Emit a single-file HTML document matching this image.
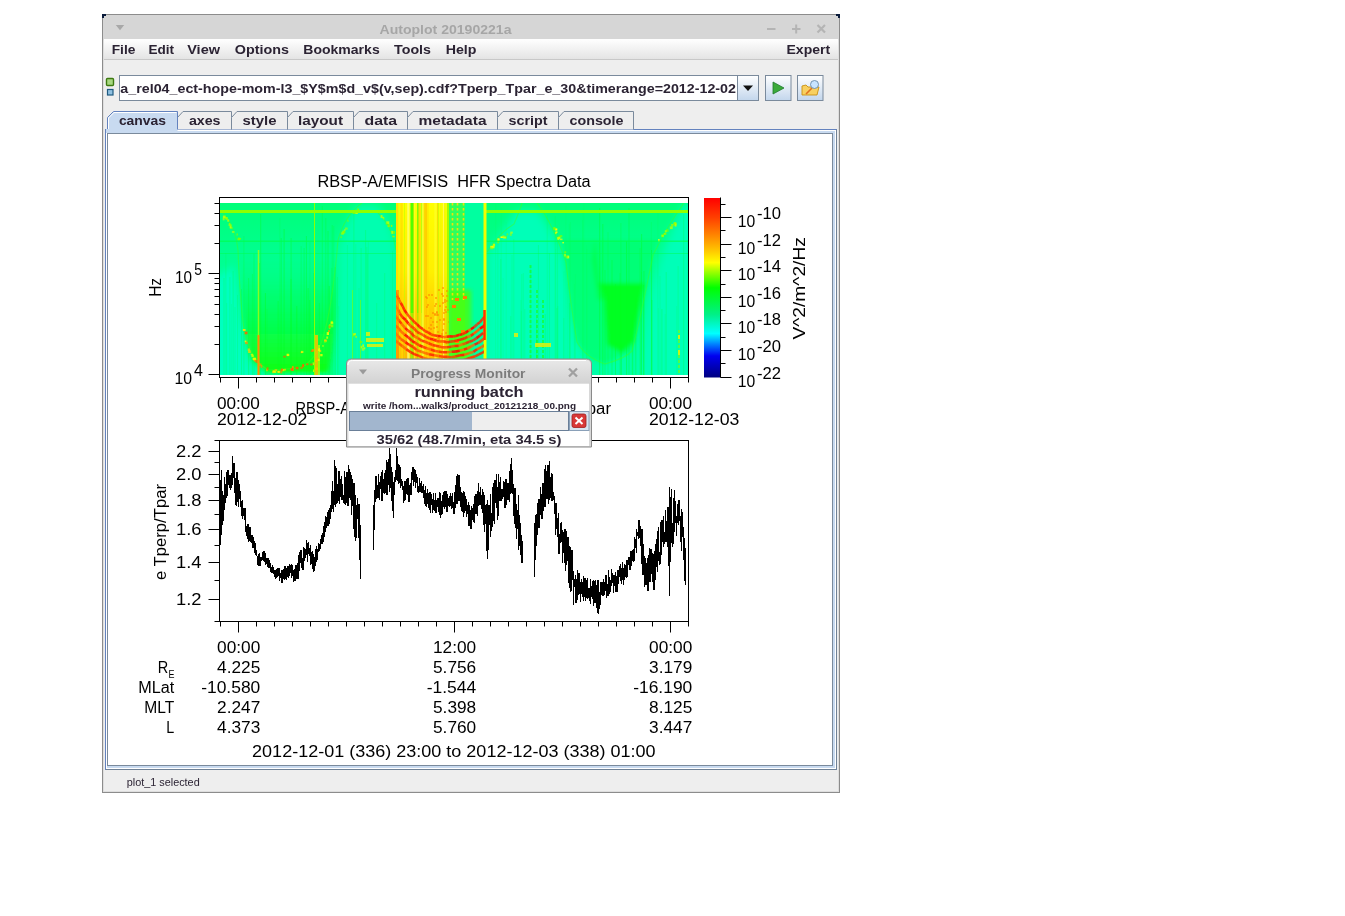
<!DOCTYPE html><html><head><meta charset="utf-8"><style>html,body{margin:0;padding:0;background:#fff;width:1345px;height:916px;overflow:hidden;position:relative}</style></head><body><svg width="1345" height="916" viewBox="0 0 1345 916" style="position:absolute;left:0;top:0;will-change:transform" font-family='"Liberation Sans", sans-serif'>
<defs>
<linearGradient id="menug" x1="0" y1="0" x2="0" y2="1"><stop offset="0" stop-color="#ffffff"/><stop offset="1" stop-color="#e4e4e4"/></linearGradient>
<linearGradient id="btng" x1="0" y1="0" x2="0" y2="1"><stop offset="0" stop-color="#ffffff"/><stop offset="1" stop-color="#c3d6ec"/></linearGradient>
<linearGradient id="cbar" x1="0" y1="0" x2="0" y2="1">
<stop offset="0" stop-color="#ff0000"/>
<stop offset="0.11" stop-color="#ff4000"/>
<stop offset="0.20" stop-color="#ff8000"/>
<stop offset="0.285" stop-color="#ffc000"/>
<stop offset="0.36" stop-color="#ffff00"/>
<stop offset="0.41" stop-color="#a0ff00"/>
<stop offset="0.50" stop-color="#00ff00"/>
<stop offset="0.65" stop-color="#00f088"/>
<stop offset="0.755" stop-color="#00ffff"/>
<stop offset="0.815" stop-color="#0080ff"/>
<stop offset="0.88" stop-color="#0000f0"/>
<stop offset="1" stop-color="#000080"/>
</linearGradient>
<linearGradient id="specbg" x1="0" y1="0" x2="0" y2="1">
<stop offset="0" stop-color="#00ff78"/>
<stop offset="0.3" stop-color="#00ff90"/>
<stop offset="1" stop-color="#00ffa8"/>
</linearGradient>
<filter id="blur2"><feGaussianBlur stdDeviation="2"/></filter>
<filter id="blur4"><feGaussianBlur stdDeviation="4"/></filter>
<filter id="blur8"><feGaussianBlur stdDeviation="8"/></filter>
<clipPath id="specclip"><rect x="220" y="203" width="468" height="172"/></clipPath>
<clipPath id="tsclip"><rect x="220" y="440.5" width="468" height="180.5"/></clipPath>
</defs>
<rect x="0" y="0" width="1345" height="916" fill="#ffffff"/>
<rect x="102" y="14" width="738" height="779" fill="#8c8c8c"/>
<rect x="103" y="15" width="736" height="777" fill="#dedede"/>
<rect x="104" y="15" width="734" height="776" fill="#eeeeee"/>
<rect x="103" y="15" width="736" height="24.5" fill="#d6d6d6"/>
<path d="M102 14 H106 V16 H104 V18 H102 Z" fill="#0a1a3a"/><path d="M840 14 H836 V16 H838 V18 H840 Z" fill="#0a1a3a"/>
<path d="M115.8 25 L124.2 25 L120 30.3 Z" fill="#a8a8a8"/>
<text x="379.5" y="33.7" font-size="13" font-weight="bold" fill="#a6a6a6" text-anchor="start" textLength="132" lengthAdjust="spacingAndGlyphs" >Autoplot 20190221a</text>
<rect x="767" y="28" width="8.5" height="2" fill="#b4b4b4"/>
<rect x="792" y="28" width="8.5" height="2" fill="#b4b4b4"/><rect x="795.2" y="24.5" width="2" height="9" fill="#b4b4b4"/>
<path d="M817.5 25 L825 32.5 M825 25 L817.5 32.5" stroke="#b4b4b4" stroke-width="2.2"/>
<rect x="104" y="39" width="734" height="20" fill="url(#menug)"/>
<rect x="104" y="59" width="734" height="1" fill="#c8c8c8"/>
<text x="111.7" y="53.8" font-size="12.6" font-weight="bold" fill="#2b2333" text-anchor="start" textLength="23.7" lengthAdjust="spacingAndGlyphs" >File</text>
<text x="148.5" y="53.8" font-size="12.6" font-weight="bold" fill="#2b2333" text-anchor="start" textLength="25.6" lengthAdjust="spacingAndGlyphs" >Edit</text>
<text x="187.2" y="53.8" font-size="12.6" font-weight="bold" fill="#2b2333" text-anchor="start" textLength="32.8" lengthAdjust="spacingAndGlyphs" >View</text>
<text x="234.8" y="53.8" font-size="12.6" font-weight="bold" fill="#2b2333" text-anchor="start" textLength="54.2" lengthAdjust="spacingAndGlyphs" >Options</text>
<text x="303.3" y="53.8" font-size="12.6" font-weight="bold" fill="#2b2333" text-anchor="start" textLength="76.4" lengthAdjust="spacingAndGlyphs" >Bookmarks</text>
<text x="394.1" y="53.8" font-size="12.6" font-weight="bold" fill="#2b2333" text-anchor="start" textLength="36.9" lengthAdjust="spacingAndGlyphs" >Tools</text>
<text x="445.7" y="53.8" font-size="12.6" font-weight="bold" fill="#2b2333" text-anchor="start" textLength="30.8" lengthAdjust="spacingAndGlyphs" >Help</text>
<text x="786.5" y="53.8" font-size="12.6" font-weight="bold" fill="#2b2333" text-anchor="start" textLength="43.7" lengthAdjust="spacingAndGlyphs" >Expert</text>
<rect x="106.5" y="78.5" width="7" height="7" rx="1" fill="#a8d880" stroke="#3d7a10" stroke-width="1.4"/>
<rect x="107.5" y="89.5" width="5.5" height="5.5" fill="#90c0e0" stroke="#1f5a80" stroke-width="1.2"/>
<rect x="119.5" y="75.5" width="618" height="25" fill="#ffffff" stroke="#7a8a9c" stroke-width="1"/>
<text x="120.3" y="92.5" font-size="13" font-weight="bold" fill="#2b2333" text-anchor="start" textLength="615.7" lengthAdjust="spacingAndGlyphs" >a_rel04_ect-hope-mom-l3_$Y$m$d_v$(v,sep).cdf?Tperp_Tpar_e_30&amp;timerange=2012-12-02</text>
<rect x="737.5" y="75.5" width="21" height="25" fill="url(#btng)" stroke="#7a8a9c"/>
<path d="M743 85.5 L753 85.5 L748 91 Z" fill="#111"/>
<rect x="765.5" y="75.5" width="25.5" height="25" fill="url(#btng)" stroke="#7a8a9c"/>
<path d="M773 82 L773 94 L784 88 Z" fill="#3aaa3a" stroke="#1f7a2f" stroke-width="0.8"/>
<rect x="797.5" y="75.5" width="25.5" height="25" fill="url(#btng)" stroke="#7a8a9c"/>
<path d="M802 86 L802 95 L817 95 L819 87 L808 87 L806 85 Z" fill="#f8d060" stroke="#c89010" stroke-width="0.9"/>
<path d="M806 94 L812 88" stroke="#e07020" stroke-width="1.6"/>
<circle cx="814.5" cy="84.5" r="4" fill="#c8e4ff" stroke="#6a8aa8" stroke-width="0.9"/>
<rect x="105.5" y="129.5" width="731" height="640" fill="#c8daf0" stroke="#6382be" stroke-width="1"/>
<path d="M836.5 129.5 V769.5 H105.5" fill="none" stroke="#6f8196" stroke-width="1"/>
<rect x="106.5" y="130.5" width="729" height="638" fill="none" stroke="#ffffff" stroke-width="1"/>
<rect x="107.5" y="133.5" width="725" height="632" fill="#ffffff" stroke="#7a8a9c" stroke-width="1"/>
<path d="M177.5 129.5 L177.5 117.5 L183 111.5 L231.5 111.5 L231.5 129.5" fill="#eeeeee" stroke="#7a8a9c" stroke-width="1"/>
<text x="188.9" y="124.6" font-size="13" font-weight="bold" fill="#2b2333" text-anchor="start" textLength="31.6" lengthAdjust="spacingAndGlyphs" >axes</text>
<path d="M231.5 129.5 L231.5 117.5 L237 111.5 L287.5 111.5 L287.5 129.5" fill="#eeeeee" stroke="#7a8a9c" stroke-width="1"/>
<text x="242.5" y="124.6" font-size="13" font-weight="bold" fill="#2b2333" text-anchor="start" textLength="34" lengthAdjust="spacingAndGlyphs" >style</text>
<path d="M287.5 129.5 L287.5 117.5 L293 111.5 L353.5 111.5 L353.5 129.5" fill="#eeeeee" stroke="#7a8a9c" stroke-width="1"/>
<text x="298" y="124.6" font-size="13" font-weight="bold" fill="#2b2333" text-anchor="start" textLength="45" lengthAdjust="spacingAndGlyphs" >layout</text>
<path d="M353.5 129.5 L353.5 117.5 L359 111.5 L407.5 111.5 L407.5 129.5" fill="#eeeeee" stroke="#7a8a9c" stroke-width="1"/>
<text x="364.5" y="124.6" font-size="13" font-weight="bold" fill="#2b2333" text-anchor="start" textLength="32.5" lengthAdjust="spacingAndGlyphs" >data</text>
<path d="M407.5 129.5 L407.5 117.5 L413 111.5 L497.5 111.5 L497.5 129.5" fill="#eeeeee" stroke="#7a8a9c" stroke-width="1"/>
<text x="418.5" y="124.6" font-size="13" font-weight="bold" fill="#2b2333" text-anchor="start" textLength="68" lengthAdjust="spacingAndGlyphs" >metadata</text>
<path d="M497.5 129.5 L497.5 117.5 L503 111.5 L558.5 111.5 L558.5 129.5" fill="#eeeeee" stroke="#7a8a9c" stroke-width="1"/>
<text x="508.5" y="124.6" font-size="13" font-weight="bold" fill="#2b2333" text-anchor="start" textLength="39" lengthAdjust="spacingAndGlyphs" >script</text>
<path d="M558.5 129.5 L558.5 117.5 L564 111.5 L633.5 111.5 L633.5 129.5" fill="#eeeeee" stroke="#7a8a9c" stroke-width="1"/>
<text x="569.5" y="124.6" font-size="13" font-weight="bold" fill="#2b2333" text-anchor="start" textLength="54" lengthAdjust="spacingAndGlyphs" >console</text>
<path d="M107.5 130 L107.5 117.5 L113.5 111.5 L177.5 111.5 L177.5 130" fill="#c8daf0" stroke="#6382be" stroke-width="1"/>
<rect x="105.5" y="129.5" width="1" height="1" fill="#6382be"/>
<path d="M108.5 130 L108.5 118 L114 112.5 L176.5 112.5" fill="none" stroke="#ffffff" stroke-width="1"/>
<rect x="106" y="129" width="71.5" height="4" fill="#c8daf0"/>
<text x="118.9" y="124.6" font-size="13" font-weight="bold" fill="#2b2333" text-anchor="start" textLength="47.1" lengthAdjust="spacingAndGlyphs" >canvas</text>
<text x="126.7" y="786" font-size="11" font-weight="normal" fill="#2b2333" text-anchor="start" textLength="73" lengthAdjust="spacingAndGlyphs" >plot_1 selected</text>
<g clip-path="url(#specclip)">
<rect x="220" y="203" width="468" height="172" fill="url(#specbg)"/>
<g filter="url(#blur4)">
<path d="M212 280 L234 266 L240 320 L248 365 L262 382 L212 382 Z" fill="#00ffc0"/>
<path d="M339 250 Q344 222 357 205 L378 205 Q390 220 396 248 L396 382 L337 382 Z" fill="#00ffb0"/>
<path d="M488 255 Q505 228 516 210 L538 210 Q556 236 564 262 L572 315 L577 342 L590 382 L487 382 Z" fill="#00ffb8"/>
<path d="M650 300 Q660 250 684 203 L696 203 L696 382 L640 382 Z" fill="#00ffb8"/>
</g>
<defs><linearGradient id="u1g" x1="0" y1="0" x2="0" y2="1"><stop offset="0" stop-color="#00ff80" stop-opacity="0"/><stop offset="0.35" stop-color="#00ff60" stop-opacity="0.7"/><stop offset="1" stop-color="#10ff10" stop-opacity="1"/></linearGradient>
<linearGradient id="u2g" x1="0" y1="0" x2="0" y2="1"><stop offset="0" stop-color="#00ff80" stop-opacity="0"/><stop offset="0.3" stop-color="#00ff50" stop-opacity="0.8"/><stop offset="0.7" stop-color="#00ff10" stop-opacity="1"/><stop offset="1" stop-color="#00ff40" stop-opacity="0.8"/></linearGradient></defs>
<g filter="url(#blur2)">
<path d="M240 255 Q241 330 252 360 L268 373 L328 373 Q337 330 338 255 Z" fill="url(#u1g)"/>
<path d="M562 240 L566 262 L572 315 L577 342 L590 359 L605 364 L632 351 L644 300 L653 255 L657 240 Z" fill="#00ff70" opacity="0.8"/>
<path d="M598 283 L604 300 L607 345 L622 353 L634 342 L643 290 L645 283 Z" fill="#00ff20"/>
<path d="M595 240 L600 283 L606 300 L598 300 L592 260 Z" fill="#00ff40" opacity="0.7"/>
</g>
<rect x="331.4" y="268" width="1" height="107" fill="#00ff20" opacity="0.26"/>
<rect x="502.6" y="278" width="1" height="97" fill="#00ff60" opacity="0.17"/>
<rect x="226.2" y="303" width="1" height="72" fill="#00ff60" opacity="0.23"/>
<rect x="329.7" y="322" width="1" height="53" fill="#00ff20" opacity="0.29"/>
<rect x="611.5" y="260" width="1" height="115" fill="#00ff20" opacity="0.34"/>
<rect x="290.5" y="279" width="1" height="96" fill="#00ff20" opacity="0.41"/>
<rect x="566.9" y="284" width="1" height="91" fill="#00ff60" opacity="0.17"/>
<rect x="574.9" y="274" width="1" height="101" fill="#00ff60" opacity="0.24"/>
<rect x="234.5" y="307" width="1" height="68" fill="#00ff60" opacity="0.29"/>
<rect x="556.4" y="308" width="1" height="67" fill="#00ff60" opacity="0.36"/>
<rect x="651.1" y="250" width="1" height="125" fill="#00ff20" opacity="0.39"/>
<rect x="657.9" y="308" width="1" height="67" fill="#00ff60" opacity="0.18"/>
<rect x="283.6" y="229" width="1" height="146" fill="#00ff20" opacity="0.44"/>
<rect x="513.3" y="239" width="1" height="136" fill="#00ff60" opacity="0.30"/>
<rect x="384.2" y="273" width="1" height="102" fill="#00ff60" opacity="0.33"/>
<rect x="643.2" y="285" width="1" height="90" fill="#00ff20" opacity="0.43"/>
<rect x="620.8" y="322" width="1" height="53" fill="#00ff20" opacity="0.35"/>
<rect x="296.3" y="306" width="1" height="69" fill="#00ff20" opacity="0.44"/>
<rect x="643.4" y="271" width="1" height="104" fill="#00ff20" opacity="0.36"/>
<rect x="318.8" y="303" width="1" height="72" fill="#00ff20" opacity="0.32"/>
<rect x="353.4" y="211" width="1" height="164" fill="#00ff60" opacity="0.41"/>
<rect x="683.2" y="214" width="1" height="161" fill="#00ff60" opacity="0.39"/>
<rect x="290.6" y="238" width="1" height="137" fill="#00ff20" opacity="0.38"/>
<rect x="628.5" y="208" width="1" height="167" fill="#00ff20" opacity="0.33"/>
<rect x="241.0" y="289" width="1" height="86" fill="#00ff20" opacity="0.25"/>
<rect x="632.3" y="321" width="1" height="54" fill="#00ff20" opacity="0.30"/>
<rect x="687.3" y="240" width="1" height="135" fill="#00ff60" opacity="0.17"/>
<rect x="500.7" y="207" width="1" height="168" fill="#00ff60" opacity="0.21"/>
<rect x="505.7" y="222" width="1" height="153" fill="#00ff60" opacity="0.16"/>
<rect x="626.1" y="241" width="1" height="134" fill="#00ff20" opacity="0.44"/>
<rect x="639.6" y="248" width="1" height="127" fill="#00ff20" opacity="0.29"/>
<rect x="521.3" y="274" width="1" height="101" fill="#00ff60" opacity="0.32"/>
<rect x="510.2" y="316" width="1" height="59" fill="#00ff60" opacity="0.30"/>
<rect x="557.1" y="232" width="1" height="143" fill="#00ff60" opacity="0.24"/>
<rect x="677.6" y="266" width="1" height="109" fill="#00ff60" opacity="0.31"/>
<rect x="225.4" y="253" width="1" height="122" fill="#00ff60" opacity="0.32"/>
<rect x="229.4" y="277" width="1" height="98" fill="#00ff60" opacity="0.34"/>
<rect x="248.1" y="278" width="1" height="97" fill="#00ff20" opacity="0.29"/>
<rect x="537.9" y="245" width="1" height="130" fill="#00ff60" opacity="0.36"/>
<rect x="565.4" y="206" width="1" height="169" fill="#00ff60" opacity="0.17"/>
<rect x="536.4" y="319" width="1" height="56" fill="#00ff60" opacity="0.23"/>
<rect x="497.4" y="241" width="1" height="134" fill="#00ff60" opacity="0.26"/>
<rect x="366.3" y="247" width="1" height="128" fill="#00ff60" opacity="0.33"/>
<rect x="360.6" y="248" width="1" height="127" fill="#00ff60" opacity="0.38"/>
<rect x="232.6" y="271" width="1" height="104" fill="#00ff60" opacity="0.37"/>
<rect x="365.1" y="230" width="1" height="145" fill="#00ff60" opacity="0.39"/>
<rect x="331.7" y="225" width="1" height="150" fill="#00ff20" opacity="0.28"/>
<rect x="546.7" y="215" width="1" height="160" fill="#00ff60" opacity="0.25"/>
<rect x="376.2" y="303" width="1" height="72" fill="#00ff60" opacity="0.28"/>
<rect x="620.4" y="223" width="1" height="152" fill="#00ff20" opacity="0.25"/>
<rect x="524.3" y="309" width="1" height="66" fill="#00ff60" opacity="0.29"/>
<rect x="325.3" y="218" width="1" height="157" fill="#00ff20" opacity="0.31"/>
<rect x="309.3" y="300" width="1" height="75" fill="#00ff20" opacity="0.40"/>
<rect x="305.9" y="236" width="1" height="139" fill="#00ff20" opacity="0.39"/>
<rect x="520.4" y="300" width="1" height="75" fill="#00ff60" opacity="0.25"/>
<rect x="280.7" y="238" width="1" height="137" fill="#00ff20" opacity="0.39"/>
<rect x="346.9" y="245" width="1" height="130" fill="#00ff60" opacity="0.28"/>
<rect x="650.8" y="222" width="1" height="153" fill="#00ff20" opacity="0.15"/>
<rect x="661.4" y="309" width="1" height="66" fill="#00ff60" opacity="0.45"/>
<rect x="664.7" y="314" width="1" height="61" fill="#00ff60" opacity="0.22"/>
<rect x="568.9" y="303" width="1" height="72" fill="#00ff60" opacity="0.35"/>
<rect x="355.3" y="244" width="1" height="131" fill="#00ff60" opacity="0.22"/>
<rect x="251.9" y="274" width="1" height="101" fill="#00ff20" opacity="0.24"/>
<rect x="599.2" y="208" width="1" height="167" fill="#00ff20" opacity="0.42"/>
<rect x="544.7" y="314" width="1" height="61" fill="#00ff60" opacity="0.42"/>
<rect x="641.0" y="272" width="1" height="103" fill="#00ff20" opacity="0.15"/>
<rect x="568.8" y="224" width="1" height="151" fill="#00ff60" opacity="0.24"/>
<rect x="530.2" y="266" width="1" height="109" fill="#00ff60" opacity="0.27"/>
<rect x="659.5" y="276" width="1" height="99" fill="#00ff60" opacity="0.25"/>
<rect x="338.2" y="306" width="1" height="69" fill="#00ff60" opacity="0.29"/>
<rect x="586.1" y="245" width="1" height="130" fill="#00ff60" opacity="0.21"/>
<rect x="602.3" y="224" width="1" height="151" fill="#00ff20" opacity="0.39"/>
<rect x="651.4" y="300" width="1" height="75" fill="#00ff20" opacity="0.40"/>
<rect x="223.5" y="278" width="1" height="97" fill="#00ff60" opacity="0.41"/>
<rect x="243.4" y="236" width="1" height="139" fill="#00ff20" opacity="0.23"/>
<rect x="583.4" y="203" width="1" height="172" fill="#00ff60" opacity="0.17"/>
<rect x="279.4" y="218" width="1" height="157" fill="#00ff20" opacity="0.17"/>
<rect x="676.2" y="306" width="1" height="69" fill="#00ff60" opacity="0.18"/>
<rect x="367.8" y="241" width="1" height="134" fill="#00ff60" opacity="0.26"/>
<rect x="522.8" y="273" width="1" height="102" fill="#00ff60" opacity="0.26"/>
<rect x="309.4" y="242" width="1" height="133" fill="#00ff20" opacity="0.19"/>
<rect x="555.1" y="249" width="1" height="126" fill="#00ff60" opacity="0.17"/>
<rect x="303.6" y="248" width="1" height="127" fill="#00ff20" opacity="0.33"/>
<rect x="586.3" y="249" width="1" height="126" fill="#00ff60" opacity="0.39"/>
<rect x="511.5" y="255" width="1" height="120" fill="#00ff60" opacity="0.26"/>
<rect x="548.9" y="253" width="1" height="122" fill="#00ff60" opacity="0.36"/>
<rect x="334.7" y="267" width="1" height="108" fill="#00ff20" opacity="0.36"/>
<rect x="253.5" y="254" width="1" height="121" fill="#00ff20" opacity="0.28"/>
<rect x="631.7" y="315" width="1" height="60" fill="#00ff20" opacity="0.26"/>
<rect x="640.2" y="298" width="1" height="77" fill="#00ff20" opacity="0.23"/>
<rect x="277.6" y="301" width="1" height="74" fill="#00ff20" opacity="0.35"/>
<rect x="635.3" y="298" width="1" height="77" fill="#00ff20" opacity="0.35"/>
<rect x="563.4" y="271" width="1" height="104" fill="#00ff60" opacity="0.18"/>
<rect x="495.1" y="204" width="1" height="171" fill="#00ff60" opacity="0.19"/>
<rect x="582.4" y="208" width="1" height="167" fill="#00ff60" opacity="0.18"/>
<rect x="266.5" y="309" width="1" height="66" fill="#00ff20" opacity="0.20"/>
<rect x="231.0" y="304" width="1" height="71" fill="#00ff60" opacity="0.19"/>
<rect x="615.0" y="284" width="1" height="91" fill="#00ff20" opacity="0.40"/>
<rect x="665.7" y="272" width="1" height="103" fill="#00ff60" opacity="0.39"/>
<rect x="237.0" y="295" width="1" height="80" fill="#00ff60" opacity="0.30"/>
<rect x="554.7" y="216" width="1" height="159" fill="#00ff60" opacity="0.37"/>
<rect x="657.4" y="210" width="1" height="165" fill="#00ff60" opacity="0.25"/>
<rect x="607.5" y="232" width="1" height="143" fill="#00ff20" opacity="0.20"/>
<rect x="337.0" y="277" width="1" height="98" fill="#00ff60" opacity="0.38"/>
<rect x="392.0" y="251" width="1" height="124" fill="#00ff60" opacity="0.26"/>
<rect x="259.0" y="263" width="1" height="112" fill="#00ff20" opacity="0.44"/>
<rect x="569.8" y="222" width="1" height="153" fill="#00ff60" opacity="0.36"/>
<rect x="573.9" y="284" width="1" height="91" fill="#00ff60" opacity="0.31"/>
<rect x="520.9" y="311" width="1" height="64" fill="#00ff60" opacity="0.19"/>
<rect x="264.9" y="293" width="1" height="82" fill="#00ff20" opacity="0.42"/>
<rect x="556.5" y="225" width="1" height="150" fill="#00ff60" opacity="0.23"/>
<rect x="313.2" y="273" width="1" height="102" fill="#00ff20" opacity="0.24"/>
<rect x="328.7" y="286" width="1" height="89" fill="#00ff20" opacity="0.44"/>
<rect x="358.5" y="288" width="1" height="87" fill="#00ff60" opacity="0.27"/>
<rect x="619.5" y="273" width="1" height="102" fill="#00ff20" opacity="0.23"/>
<rect x="321.8" y="206" width="1" height="169" fill="#00ff20" opacity="0.29"/>
<rect x="300.6" y="246" width="1" height="129" fill="#00ff20" opacity="0.25"/>
<rect x="582.3" y="220" width="1" height="155" fill="#00ff60" opacity="0.45"/>
<rect x="500.3" y="259" width="1" height="116" fill="#00ff60" opacity="0.40"/>
<rect x="604.5" y="270" width="1" height="105" fill="#00ff20" opacity="0.29"/>
<rect x="557.3" y="306" width="1" height="69" fill="#00ff60" opacity="0.27"/>
<rect x="563.3" y="318" width="1" height="57" fill="#00ff60" opacity="0.29"/>
<rect x="327.5" y="231" width="1" height="144" fill="#00ff20" opacity="0.37"/>
<rect x="536.1" y="318" width="1" height="57" fill="#00ff60" opacity="0.41"/>
<rect x="333.3" y="226" width="1" height="149" fill="#00ff20" opacity="0.23"/>
<rect x="307.6" y="288" width="1" height="87" fill="#00ff20" opacity="0.41"/>
<rect x="641.1" y="234" width="1" height="141" fill="#00ff20" opacity="0.41"/>
<rect x="366.7" y="254" width="1" height="121" fill="#00ff60" opacity="0.37"/>
<rect x="260.2" y="214" width="1" height="161" fill="#00ff20" opacity="0.40"/>
<g fill="none" stroke="#40ff20" stroke-width="1.2" opacity="0.45">
<path d="M222 211 Q236 228 238 250 Q240 300 244 330 Q252 365 270 370 L300 368 Q318 360 325 330 Q333 300 338 240 Q345 215 362 203"/>
<path d="M378 213 Q392 225 396 250"/>
<path d="M487 252 Q500 232 514 224 Q520 210 522 203"/>
<path d="M537 203 Q552 222 566 262 Q570 300 577 342 Q585 357 605 364 Q626 358 632 351 Q640 320 653 255 Q668 225 684 203"/>
</g>
<rect x="227.2" y="219.3" width="2.0" height="2.4" fill="#c8ff00" opacity="0.73"/>
<rect x="228.8" y="222.9" width="1.6" height="2.5" fill="#a0ff00" opacity="0.82"/>
<rect x="222.7" y="217.8" width="1.9" height="2.5" fill="#c8ff00" opacity="0.64"/>
<rect x="237.8" y="237.6" width="2.1" height="2.7" fill="#80ff00" opacity="0.87"/>
<rect x="238.4" y="237.9" width="2.7" height="1.7" fill="#80ff00" opacity="0.81"/>
<rect x="224.5" y="217.1" width="2.2" height="2.0" fill="#80ff00" opacity="0.90"/>
<rect x="231.9" y="231.1" width="2.6" height="1.7" fill="#c8ff00" opacity="0.65"/>
<rect x="237.6" y="238.3" width="1.7" height="2.0" fill="#80ff00" opacity="0.72"/>
<rect x="225.6" y="217.1" width="2.2" height="2.7" fill="#a0ff00" opacity="0.90"/>
<rect x="230.0" y="226.8" width="2.6" height="2.0" fill="#a0ff00" opacity="0.62"/>
<rect x="229.6" y="225.6" width="1.9" height="2.7" fill="#c8ff00" opacity="0.78"/>
<rect x="236.4" y="233.4" width="1.6" height="2.2" fill="#80ff00" opacity="0.64"/>
<rect x="222.9" y="215.6" width="2.7" height="2.6" fill="#c8ff00" opacity="0.87"/>
<rect x="228.6" y="224.3" width="3.0" height="1.7" fill="#a0ff00" opacity="0.82"/>
<rect x="342.5" y="230.8" width="1.8" height="2.8" fill="#c8ff00" opacity="0.96"/>
<rect x="357.1" y="208.5" width="2.1" height="2.3" fill="#80ff00" opacity="0.87"/>
<rect x="344.9" y="227.5" width="2.8" height="2.2" fill="#a0ff00" opacity="0.64"/>
<rect x="352.9" y="212.0" width="1.9" height="1.8" fill="#80ff00" opacity="0.68"/>
<rect x="352.6" y="210.8" width="2.9" height="2.9" fill="#80ff00" opacity="0.96"/>
<rect x="341.1" y="232.3" width="2.7" height="2.4" fill="#a0ff00" opacity="0.80"/>
<rect x="347.2" y="219.8" width="1.5" height="2.0" fill="#80ff00" opacity="0.65"/>
<rect x="355.4" y="211.0" width="2.4" height="2.9" fill="#c8ff00" opacity="1.00"/>
<rect x="343.9" y="229.3" width="1.6" height="1.8" fill="#c8ff00" opacity="0.64"/>
<rect x="340.4" y="236.3" width="1.6" height="1.8" fill="#80ff00" opacity="0.63"/>
<rect x="353.2" y="210.3" width="1.8" height="2.2" fill="#80ff00" opacity="0.76"/>
<rect x="342.6" y="230.7" width="2.8" height="2.6" fill="#80ff00" opacity="0.74"/>
<rect x="386.3" y="221.3" width="3.0" height="2.7" fill="#c8ff00" opacity="0.81"/>
<rect x="383.0" y="217.2" width="1.5" height="2.4" fill="#a0ff00" opacity="0.64"/>
<rect x="381.8" y="216.8" width="2.2" height="1.6" fill="#c8ff00" opacity="0.61"/>
<rect x="391.2" y="230.7" width="1.9" height="1.6" fill="#a0ff00" opacity="0.70"/>
<rect x="385.7" y="222.7" width="1.8" height="2.0" fill="#80ff00" opacity="0.62"/>
<rect x="391.3" y="231.2" width="1.9" height="2.7" fill="#c8ff00" opacity="0.80"/>
<rect x="390.8" y="224.9" width="1.5" height="2.0" fill="#a0ff00" opacity="0.87"/>
<rect x="392.3" y="235.8" width="2.4" height="1.5" fill="#a0ff00" opacity="0.80"/>
<rect x="387.7" y="224.8" width="1.8" height="2.3" fill="#c8ff00" opacity="0.74"/>
<rect x="387.8" y="224.2" width="2.0" height="2.5" fill="#80ff00" opacity="0.98"/>
<rect x="380.6" y="215.1" width="1.9" height="2.8" fill="#c8ff00" opacity="0.81"/>
<rect x="393.0" y="231.0" width="2.1" height="2.8" fill="#80ff00" opacity="0.74"/>
<rect x="491.4" y="246.4" width="2.7" height="2.2" fill="#80ff00" opacity="0.71"/>
<rect x="492.0" y="245.8" width="2.6" height="2.4" fill="#ffff00" opacity="0.62"/>
<rect x="490.2" y="246.6" width="2.6" height="2.7" fill="#a0ff00" opacity="0.73"/>
<rect x="500.5" y="236.4" width="2.7" height="1.6" fill="#ffff00" opacity="0.96"/>
<rect x="502.4" y="235.3" width="2.0" height="2.1" fill="#a0ff00" opacity="0.74"/>
<rect x="492.9" y="243.7" width="2.2" height="2.7" fill="#c8ff00" opacity="0.97"/>
<rect x="490.3" y="245.8" width="3.0" height="1.7" fill="#ffff00" opacity="0.80"/>
<rect x="509.8" y="233.1" width="2.0" height="2.8" fill="#a0ff00" opacity="0.62"/>
<rect x="504.6" y="235.9" width="2.4" height="2.8" fill="#80ff00" opacity="0.63"/>
<rect x="497.3" y="240.6" width="1.8" height="2.7" fill="#80ff00" opacity="0.76"/>
<rect x="503.1" y="236.6" width="2.7" height="1.9" fill="#ffff00" opacity="0.68"/>
<rect x="497.4" y="238.3" width="2.2" height="2.6" fill="#ffff00" opacity="0.90"/>
<rect x="510.3" y="231.6" width="2.5" height="2.0" fill="#c8ff00" opacity="0.70"/>
<rect x="506.6" y="233.4" width="1.6" height="1.9" fill="#80ff00" opacity="0.67"/>
<rect x="566.6" y="255.6" width="2.6" height="2.8" fill="#ffff00" opacity="0.75"/>
<rect x="554.9" y="228.4" width="2.4" height="2.1" fill="#ffff00" opacity="1.00"/>
<rect x="564.1" y="253.6" width="1.9" height="2.9" fill="#c8ff00" opacity="0.72"/>
<rect x="560.0" y="238.6" width="2.5" height="1.6" fill="#ffff00" opacity="0.62"/>
<rect x="557.4" y="237.1" width="1.8" height="2.7" fill="#ffff00" opacity="0.78"/>
<rect x="553.3" y="227.1" width="2.2" height="2.7" fill="#80ff00" opacity="0.98"/>
<rect x="559.4" y="235.1" width="2.9" height="2.2" fill="#80ff00" opacity="0.71"/>
<rect x="557.8" y="236.3" width="2.8" height="2.7" fill="#a0ff00" opacity="0.61"/>
<rect x="562.3" y="241.9" width="1.7" height="1.5" fill="#ffff00" opacity="0.74"/>
<rect x="565.6" y="255.8" width="2.0" height="2.3" fill="#80ff00" opacity="0.77"/>
<rect x="555.1" y="231.8" width="1.6" height="2.3" fill="#c8ff00" opacity="0.87"/>
<rect x="557.6" y="237.1" width="2.6" height="2.0" fill="#c8ff00" opacity="0.97"/>
<rect x="564.3" y="251.3" width="1.9" height="1.7" fill="#80ff00" opacity="0.82"/>
<rect x="555.7" y="231.4" width="1.8" height="1.5" fill="#ffff00" opacity="0.79"/>
<rect x="669.8" y="226.4" width="2.9" height="2.7" fill="#c8ff00" opacity="0.72"/>
<rect x="658.0" y="239.1" width="1.7" height="2.7" fill="#ffff00" opacity="0.78"/>
<rect x="671.1" y="224.0" width="2.2" height="2.9" fill="#a0ff00" opacity="0.76"/>
<rect x="673.4" y="222.5" width="2.7" height="2.9" fill="#a0ff00" opacity="0.80"/>
<rect x="661.4" y="234.3" width="2.6" height="2.9" fill="#80ff00" opacity="0.61"/>
<rect x="666.1" y="229.2" width="2.6" height="2.7" fill="#80ff00" opacity="0.67"/>
<rect x="663.7" y="233.0" width="2.7" height="2.0" fill="#80ff00" opacity="0.73"/>
<rect x="663.8" y="232.9" width="1.9" height="1.7" fill="#a0ff00" opacity="0.80"/>
<rect x="674.0" y="222.9" width="2.6" height="2.5" fill="#a0ff00" opacity="0.85"/>
<rect x="673.8" y="223.1" width="1.5" height="1.9" fill="#80ff00" opacity="0.99"/>
<rect x="664.8" y="230.2" width="1.9" height="2.3" fill="#c8ff00" opacity="0.66"/>
<rect x="674.7" y="223.6" width="1.8" height="3.0" fill="#c8ff00" opacity="0.76"/>
<rect x="661.4" y="234.8" width="2.4" height="2.0" fill="#c8ff00" opacity="0.62"/>
<rect x="674.0" y="222.1" width="2.3" height="2.1" fill="#a0ff00" opacity="0.71"/>
<rect x="244.7" y="340.6" width="1.7" height="1.7" fill="#ffff00" opacity="0.97"/>
<rect x="243.0" y="329.3" width="2.1" height="1.7" fill="#ff6000" opacity="0.98"/>
<rect x="252.6" y="357.9" width="2.6" height="2.0" fill="#e0ff00" opacity="0.83"/>
<rect x="253.5" y="358.5" width="2.3" height="2.2" fill="#ffd000" opacity="0.90"/>
<rect x="248.1" y="350.4" width="2.6" height="2.6" fill="#ffd000" opacity="0.73"/>
<rect x="266.1" y="368.8" width="1.7" height="2.4" fill="#ffd000" opacity="0.65"/>
<rect x="244.7" y="331.6" width="2.8" height="2.7" fill="#ff6000" opacity="0.88"/>
<rect x="247.7" y="348.5" width="2.2" height="2.4" fill="#ffd000" opacity="0.73"/>
<rect x="254.3" y="359.6" width="2.1" height="2.0" fill="#ff9000" opacity="0.94"/>
<rect x="266.6" y="367.2" width="1.9" height="3.0" fill="#ff6000" opacity="0.69"/>
<rect x="274.6" y="369.3" width="2.6" height="1.9" fill="#ffd000" opacity="0.79"/>
<rect x="255.6" y="360.0" width="2.8" height="3.0" fill="#ff6000" opacity="0.62"/>
<rect x="251.4" y="354.7" width="2.3" height="2.4" fill="#e0ff00" opacity="0.75"/>
<rect x="274.2" y="371.1" width="2.0" height="1.8" fill="#e0ff00" opacity="0.89"/>
<rect x="250.8" y="353.8" width="2.3" height="1.5" fill="#e0ff00" opacity="0.75"/>
<rect x="258.7" y="363.4" width="2.8" height="2.4" fill="#ff9000" opacity="0.63"/>
<rect x="242.8" y="329.1" width="2.8" height="1.8" fill="#ffff00" opacity="0.82"/>
<rect x="272.2" y="370.5" width="2.3" height="2.6" fill="#ffd000" opacity="0.78"/>
<rect x="260.6" y="365.0" width="1.7" height="2.8" fill="#ff9000" opacity="0.71"/>
<rect x="245.1" y="341.7" width="2.7" height="2.4" fill="#ff9000" opacity="0.75"/>
<rect x="253.1" y="357.7" width="3.0" height="2.2" fill="#e0ff00" opacity="0.83"/>
<rect x="273.0" y="370.4" width="1.9" height="1.9" fill="#ffff00" opacity="0.63"/>
<rect x="314.5" y="359.8" width="2.6" height="2.0" fill="#e0ff00" opacity="0.85"/>
<rect x="280.8" y="368.7" width="2.5" height="2.5" fill="#ff9000" opacity="0.68"/>
<rect x="292.1" y="368.5" width="1.6" height="2.5" fill="#ff6000" opacity="0.70"/>
<rect x="312.6" y="362.4" width="1.8" height="2.7" fill="#e0ff00" opacity="0.71"/>
<rect x="316.5" y="357.8" width="2.5" height="2.3" fill="#ff6000" opacity="0.65"/>
<rect x="300.4" y="366.8" width="2.4" height="2.0" fill="#ff6000" opacity="0.68"/>
<rect x="277.1" y="370.8" width="2.1" height="2.0" fill="#ffd000" opacity="0.67"/>
<rect x="280.1" y="370.5" width="2.2" height="2.9" fill="#ff9000" opacity="0.67"/>
<rect x="277.9" y="370.8" width="2.2" height="2.1" fill="#ffff00" opacity="0.69"/>
<rect x="291.9" y="366.1" width="1.8" height="1.9" fill="#ff9000" opacity="0.89"/>
<rect x="284.1" y="368.8" width="2.0" height="1.8" fill="#ffd000" opacity="0.69"/>
<rect x="306.1" y="363.4" width="2.4" height="1.8" fill="#ff6000" opacity="0.77"/>
<rect x="282.4" y="369.1" width="2.0" height="2.1" fill="#e0ff00" opacity="0.80"/>
<rect x="302.2" y="364.2" width="1.9" height="2.8" fill="#ff6000" opacity="0.99"/>
<rect x="290.5" y="368.3" width="3.0" height="2.2" fill="#ff9000" opacity="0.95"/>
<rect x="281.0" y="368.7" width="2.0" height="2.0" fill="#ff6000" opacity="0.66"/>
<rect x="314.7" y="359.9" width="2.1" height="1.6" fill="#ff6000" opacity="0.64"/>
<rect x="310.2" y="363.5" width="2.3" height="2.0" fill="#ff6000" opacity="0.73"/>
<rect x="295.6" y="366.8" width="2.9" height="2.5" fill="#ff6000" opacity="0.89"/>
<rect x="290.9" y="368.2" width="2.2" height="2.4" fill="#ff6000" opacity="0.93"/>
<rect x="310.8" y="350.3" width="2.0" height="1.7" fill="#ff6000" opacity="0.76"/>
<rect x="286.7" y="353.7" width="2.1" height="2.4" fill="#e0ff00" opacity="0.88"/>
<rect x="286.8" y="354.2" width="2.5" height="1.7" fill="#e0ff00" opacity="0.95"/>
<rect x="300.5" y="351.6" width="2.1" height="1.6" fill="#ff9000" opacity="0.65"/>
<rect x="319.0" y="349.8" width="2.2" height="2.2" fill="#ffd000" opacity="0.71"/>
<rect x="311.7" y="349.1" width="2.9" height="2.5" fill="#ff9000" opacity="0.89"/>
<rect x="318.5" y="348.0" width="1.6" height="2.6" fill="#e0ff00" opacity="0.73"/>
<rect x="283.2" y="355.8" width="2.7" height="1.7" fill="#ff6000" opacity="0.65"/>
<rect x="317.8" y="349.0" width="2.2" height="2.1" fill="#e0ff00" opacity="0.70"/>
<rect x="301.0" y="350.9" width="2.4" height="2.1" fill="#ffff00" opacity="0.68"/>
<rect x="331.0" y="324.4" width="2.3" height="2.9" fill="#a0ff00" opacity="0.70"/>
<rect x="326.7" y="332.1" width="2.3" height="2.9" fill="#e0ff00" opacity="0.99"/>
<rect x="328.5" y="325.2" width="2.2" height="2.6" fill="#ff9000" opacity="0.70"/>
<rect x="313.0" y="369.5" width="1.6" height="2.5" fill="#c8ff00" opacity="0.88"/>
<rect x="324.5" y="339.6" width="2.5" height="2.2" fill="#ffd000" opacity="0.71"/>
<rect x="328.8" y="327.6" width="1.8" height="1.5" fill="#a0ff00" opacity="0.64"/>
<rect x="330.8" y="320.9" width="2.1" height="2.7" fill="#a0ff00" opacity="0.85"/>
<rect x="322.0" y="345.2" width="1.9" height="1.5" fill="#c8ff00" opacity="0.64"/>
<rect x="320.2" y="354.0" width="2.4" height="2.3" fill="#ffff00" opacity="0.76"/>
<rect x="326.3" y="336.5" width="1.8" height="2.2" fill="#c8ff00" opacity="0.86"/>
<rect x="328.9" y="324.1" width="2.3" height="2.1" fill="#80ff00" opacity="0.80"/>
<rect x="314.9" y="367.9" width="2.9" height="2.4" fill="#ff9000" opacity="0.72"/>
<rect x="324.1" y="339.5" width="1.8" height="2.3" fill="#ffd000" opacity="0.79"/>
<rect x="316.8" y="358.9" width="2.9" height="2.1" fill="#ffff00" opacity="0.62"/>
<rect x="324.0" y="341.1" width="2.2" height="1.5" fill="#80ff00" opacity="0.80"/>
<rect x="330.6" y="321.9" width="2.7" height="2.0" fill="#ffff00" opacity="0.65"/>
<rect x="328.0" y="330.2" width="1.9" height="1.7" fill="#ff9000" opacity="0.85"/>
<rect x="315.5" y="367.6" width="2.5" height="2.3" fill="#ffd000" opacity="0.74"/>
<rect x="360.5" y="345.8" width="1.6" height="2.5" fill="#c8ff00" opacity="0.79"/>
<rect x="363.8" y="347.3" width="1.5" height="2.0" fill="#c8ff00" opacity="0.90"/>
<rect x="355.4" y="335.9" width="1.6" height="1.9" fill="#a0ff00" opacity="0.89"/>
<rect x="361.7" y="347.7" width="2.5" height="3.0" fill="#c8ff00" opacity="0.67"/>
<rect x="352.9" y="334.1" width="1.8" height="2.3" fill="#80ff00" opacity="0.83"/>
<rect x="359.6" y="341.0" width="2.7" height="2.0" fill="#80ff00" opacity="0.76"/>
<rect x="362.3" y="344.4" width="1.7" height="2.8" fill="#c8ff00" opacity="0.89"/>
<rect x="353.3" y="333.1" width="2.6" height="2.2" fill="#c8ff00" opacity="0.85"/>
<rect x="220" y="210" width="468" height="3" fill="#90ff00"/>
<rect x="220" y="240.5" width="468" height="1.5" fill="#00ff50" opacity="0.7"/>
<rect x="220" y="253" width="468" height="1" fill="#00ff50" opacity="0.5"/>
<defs><linearGradient id="bandg" x1="0" y1="0" x2="0" y2="1"><stop offset="0" stop-color="#ffff00"/><stop offset="0.4" stop-color="#fff000"/><stop offset="0.62" stop-color="#ffd000"/><stop offset="1" stop-color="#ffb000"/></linearGradient></defs>
<rect x="396" y="203" width="53" height="172" fill="url(#bandg)"/>
<rect x="420.7" y="203" width="1" height="172" fill="#ffff30" opacity="0.7"/>
<rect x="443.6" y="203" width="1" height="172" fill="#ffe000" opacity="0.7"/>
<rect x="446.9" y="203" width="2" height="172" fill="#ffe000" opacity="0.7"/>
<rect x="436.4" y="203" width="1" height="172" fill="#ffff30" opacity="0.7"/>
<rect x="401.4" y="203" width="1.5" height="172" fill="#ffe000" opacity="0.7"/>
<rect x="424.6" y="203" width="2" height="172" fill="#ffe000" opacity="0.7"/>
<rect x="418.6" y="203" width="1" height="172" fill="#ffe000" opacity="0.7"/>
<rect x="407.2" y="203" width="2" height="172" fill="#ffff80" opacity="0.7"/>
<rect x="421.9" y="203" width="2" height="172" fill="#ffff80" opacity="0.7"/>
<rect x="422.7" y="203" width="1.5" height="172" fill="#ffff30" opacity="0.7"/>
<rect x="424.6" y="203" width="1.5" height="172" fill="#ffc000" opacity="0.7"/>
<rect x="412.5" y="203" width="1" height="172" fill="#ffd000" opacity="0.7"/>
<rect x="446.7" y="203" width="1" height="172" fill="#e0ff00" opacity="0.7"/>
<rect x="400.5" y="203" width="1" height="172" fill="#ffd000" opacity="0.7"/>
<rect x="440.4" y="203" width="1" height="172" fill="#e0ff00" opacity="0.7"/>
<rect x="434.4" y="203" width="1.5" height="172" fill="#ffff30" opacity="0.7"/>
<rect x="425.0" y="203" width="1" height="172" fill="#ffe000" opacity="0.7"/>
<rect x="425.1" y="203" width="1" height="172" fill="#ffd000" opacity="0.7"/>
<rect x="422.4" y="203" width="1" height="172" fill="#e0ff00" opacity="0.7"/>
<rect x="444.6" y="203" width="1" height="172" fill="#e0ff00" opacity="0.7"/>
<rect x="437.1" y="203" width="1" height="172" fill="#e0ff00" opacity="0.7"/>
<rect x="411.1" y="203" width="1" height="172" fill="#e0ff00" opacity="0.7"/>
<rect x="443.1" y="203" width="1" height="172" fill="#ffff80" opacity="0.7"/>
<rect x="419.6" y="203" width="1" height="172" fill="#e0ff00" opacity="0.7"/>
<rect x="423.7" y="203" width="1.5" height="172" fill="#ffd000" opacity="0.7"/>
<rect x="426.1" y="203" width="1" height="172" fill="#ffc000" opacity="0.7"/>
<rect x="419.5" y="203" width="1.5" height="172" fill="#ffe000" opacity="0.7"/>
<rect x="414.2" y="203" width="1" height="172" fill="#ffff30" opacity="0.7"/>
<rect x="417.9" y="203" width="1.5" height="172" fill="#ffd000" opacity="0.7"/>
<rect x="437.3" y="203" width="1" height="172" fill="#ffc000" opacity="0.7"/>
<rect x="409.1" y="203" width="1" height="172" fill="#ffff30" opacity="0.7"/>
<rect x="397.3" y="203" width="1.5" height="172" fill="#e0ff00" opacity="0.7"/>
<rect x="427.2" y="203" width="1.5" height="172" fill="#ffe000" opacity="0.7"/>
<rect x="398.5" y="203" width="1" height="172" fill="#e0ff00" opacity="0.7"/>
<rect x="396" y="203" width="2" height="172" fill="#ffe000"/>
<rect x="410.5" y="203" width="3" height="110" fill="#40ff00" opacity="0.9"/>
<rect x="410.5" y="313" width="3" height="62" fill="#40ff00" opacity="0.45"/>
<rect x="417" y="203" width="1.5" height="110" fill="#60ff00" opacity="0.8"/>
<rect x="417" y="313" width="1.5" height="62" fill="#60ff00" opacity="0.40"/>
<rect x="421" y="203" width="1" height="110" fill="#a0ff00" opacity="0.7"/>
<rect x="421" y="313" width="1" height="62" fill="#a0ff00" opacity="0.35"/>
<rect x="447" y="203" width="2" height="110" fill="#80ff00" opacity="0.7"/>
<rect x="447" y="313" width="2" height="62" fill="#80ff00" opacity="0.35"/>
<rect x="404" y="203" width="1" height="110" fill="#c0ff00" opacity="0.6"/>
<rect x="404" y="313" width="1" height="62" fill="#c0ff00" opacity="0.30"/>
<rect x="438" y="203" width="1" height="110" fill="#c0ff00" opacity="0.6"/>
<rect x="438" y="313" width="1" height="62" fill="#c0ff00" opacity="0.30"/>
<rect x="435" y="303" width="2" height="2" fill="#ff9000" opacity="0.6"/>
<rect x="432" y="312" width="2" height="2" fill="#ff9000" opacity="0.6"/>
<rect x="444" y="309" width="2" height="2" fill="#ff9000" opacity="0.6"/>
<rect x="443" y="312" width="2" height="2" fill="#ff9000" opacity="0.6"/>
<rect x="428" y="294" width="2" height="2" fill="#ff9000" opacity="0.6"/>
<rect x="445" y="311" width="2" height="2" fill="#ff9000" opacity="0.6"/>
<rect x="434" y="313" width="2" height="2" fill="#ff9000" opacity="0.6"/>
<rect x="445" y="306" width="2" height="2" fill="#ff9000" opacity="0.6"/>
<rect x="434" y="305" width="2" height="2" fill="#ff9000" opacity="0.6"/>
<rect x="425" y="315" width="2" height="2" fill="#ff9000" opacity="0.6"/>
<rect x="436" y="312" width="2" height="2" fill="#ff9000" opacity="0.6"/>
<rect x="436" y="311" width="2" height="2" fill="#ff9000" opacity="0.6"/>
<rect x="442" y="295" width="2" height="2" fill="#ff9000" opacity="0.6"/>
<rect x="449" y="291" width="2" height="2" fill="#ff9000" opacity="0.6"/>
<rect x="446" y="295" width="2" height="2" fill="#ff9000" opacity="0.6"/>
<rect x="444" y="299" width="2" height="2" fill="#ff9000" opacity="0.6"/>
<rect x="427" y="315" width="2" height="2" fill="#ff9000" opacity="0.6"/>
<rect x="445" y="332" width="2" height="2" fill="#ff9000" opacity="0.6"/>
<rect x="446" y="339" width="2" height="2" fill="#ff9000" opacity="0.6"/>
<rect x="426" y="306" width="2" height="2" fill="#ff9000" opacity="0.6"/>
<rect x="428" y="327" width="2" height="2" fill="#ff9000" opacity="0.6"/>
<rect x="436" y="326" width="2" height="2" fill="#ff9000" opacity="0.6"/>
<rect x="444" y="340" width="2" height="2" fill="#ff9000" opacity="0.6"/>
<rect x="441" y="333" width="2" height="2" fill="#ff9000" opacity="0.6"/>
<rect x="438" y="289" width="2" height="2" fill="#ff9000" opacity="0.6"/>
<rect x="446" y="290" width="2" height="2" fill="#ff9000" opacity="0.6"/>
<rect x="427" y="331" width="2" height="2" fill="#ff9000" opacity="0.6"/>
<rect x="432" y="321" width="2" height="2" fill="#ff9000" opacity="0.6"/>
<rect x="426" y="297" width="2" height="2" fill="#ff9000" opacity="0.6"/>
<rect x="442" y="287" width="2" height="2" fill="#ff9000" opacity="0.6"/>
<rect x="437" y="337" width="2" height="2" fill="#ff9000" opacity="0.6"/>
<rect x="430" y="324" width="2" height="2" fill="#ff9000" opacity="0.6"/>
<rect x="443" y="319" width="2" height="2" fill="#ff9000" opacity="0.6"/>
<rect x="443" y="323" width="2" height="2" fill="#ff9000" opacity="0.6"/>
<rect x="425" y="296" width="2" height="2" fill="#ff9000" opacity="0.6"/>
<rect x="438" y="338" width="2" height="2" fill="#ff9000" opacity="0.6"/>
<rect x="430" y="317" width="2" height="2" fill="#ff9000" opacity="0.6"/>
<rect x="428" y="332" width="2" height="2" fill="#ff9000" opacity="0.6"/>
<rect x="436" y="314" width="2" height="2" fill="#ff9000" opacity="0.6"/>
<rect x="441" y="293" width="2" height="2" fill="#ff9000" opacity="0.6"/>
<rect x="442" y="329" width="2" height="2" fill="#ff9000" opacity="0.6"/>
<rect x="446" y="300" width="2" height="2" fill="#ff9000" opacity="0.6"/>
<rect x="431" y="294" width="2" height="2" fill="#ff9000" opacity="0.6"/>
<rect x="447" y="309" width="2" height="2" fill="#ff9000" opacity="0.6"/>
<rect x="434" y="314" width="2" height="2" fill="#ff9000" opacity="0.6"/>
<rect x="442" y="302" width="2" height="2" fill="#ff9000" opacity="0.6"/>
<rect x="433" y="327" width="2" height="2" fill="#ff9000" opacity="0.6"/>
<rect x="444" y="301" width="2" height="2" fill="#ff9000" opacity="0.6"/>
<rect x="427" y="336" width="2" height="2" fill="#ff9000" opacity="0.6"/>
<rect x="443" y="318" width="2" height="2" fill="#ff9000" opacity="0.6"/>
<rect x="435" y="338" width="2" height="2" fill="#ff9000" opacity="0.6"/>
<rect x="435" y="297" width="2" height="2" fill="#ff9000" opacity="0.6"/>
<rect x="427" y="304" width="2" height="2" fill="#ff9000" opacity="0.6"/>
<rect x="439" y="305" width="2" height="2" fill="#ff9000" opacity="0.6"/>
<rect x="448" y="321" width="2" height="2" fill="#ff9000" opacity="0.6"/>
<rect x="436" y="321" width="2" height="2" fill="#ff9000" opacity="0.6"/>
<rect x="439" y="319" width="2" height="2" fill="#ff9000" opacity="0.6"/>
<rect x="437" y="314" width="2" height="2" fill="#ff9000" opacity="0.6"/>
<rect x="437" y="331" width="2" height="2" fill="#ff9000" opacity="0.6"/>
<rect x="430" y="328" width="2" height="2" fill="#ff9000" opacity="0.6"/>
<rect x="449" y="203" width="36" height="172" fill="#00ffa0"/>
<rect x="449" y="203" width="16" height="172" fill="#40ff40" opacity="0.7"/>
<rect x="449" y="290" width="22" height="85" fill="#50ff00" opacity="0.75" filter="url(#blur2)"/>
<path d="M452.5 203 V300" stroke="#ffe000" stroke-width="1.6" stroke-dasharray="2.5 2.5" opacity="0.9"/>
<path d="M457.5 203 V300" stroke="#ffe000" stroke-width="1.6" stroke-dasharray="2.5 2.5" opacity="0.9"/>
<path d="M463.5 203 V300" stroke="#ffe000" stroke-width="1.6" stroke-dasharray="2.5 2.5" opacity="0.9"/>
<rect x="455" y="298" width="4" height="3" fill="#ff8000"/>
<rect x="452" y="305" width="4" height="3" fill="#ff8000"/>
<rect x="457" y="318" width="4" height="3" fill="#ff8000"/>
<rect x="461" y="330" width="4" height="3" fill="#ff8000"/>
<rect x="455" y="340" width="4" height="3" fill="#ff8000"/>
<rect x="463" y="296" width="4" height="3" fill="#ff8000"/>
<rect x="483.5" y="203" width="3" height="172" fill="#f0ff00"/>
<path d="M484.5 310 V340" stroke="#ff3000" stroke-width="2.5"/>
<rect x="314" y="203" width="1" height="172" fill="#90ff00"/>
<path d="M258.5 250 V375" stroke="#c0ff00" stroke-width="1.5" opacity="0.7"/>
<path d="M258.5 335 V375" stroke="#ff9000" stroke-width="2"/>
<defs><clipPath id="bandclip"><path d="M396 288 L440 288 L484 300 L484 375 L396 375 Z"/></clipPath></defs>
<g clip-path="url(#bandclip)" fill="none" stroke-width="2.6">
<path d="M498.8 291.3L496.9 295.1" stroke="#ff4000" opacity="0.80"/>
<path d="M496.9 295.1L495.5 299.3" stroke="#ff4000" opacity="0.97"/>
<path d="M495.5 299.3L493.3 302.7" stroke="#ff2000" opacity="0.98"/>
<path d="M493.3 302.7L491.2 306.6" stroke="#ff6000" opacity="0.84"/>
<path d="M491.2 306.6L489.5 309.6" stroke="#ff6000" opacity="0.81"/>
<path d="M489.5 309.6L486.8 313.1" stroke="#ff1000" opacity="0.84"/>
<path d="M486.8 313.1L485.2 316.5" stroke="#ff4000" opacity="0.82"/>
<path d="M485.2 316.5L482.3 319.2" stroke="#ff2800" opacity="0.81"/>
<path d="M482.3 319.2L479.8 322.5" stroke="#ff2000" opacity="0.81"/>
<path d="M479.8 322.5L477.2 324.2" stroke="#ff2800" opacity="0.87"/>
<path d="M477.2 324.2L474.2 327.0" stroke="#ff2800" opacity="0.78"/>
<path d="M474.2 327.0L470.9 329.3" stroke="#ff1000" opacity="0.99"/>
<path d="M470.9 329.3L468.3 330.7" stroke="#ff6000" opacity="0.90"/>
<path d="M468.3 330.7L465.7 332.6" stroke="#ff1000" opacity="0.97"/>
<path d="M465.7 332.6L462.5 334.2" stroke="#ff2800" opacity="0.94"/>
<path d="M462.5 334.2L459.5 334.8" stroke="#ff1000" opacity="0.96"/>
<path d="M459.5 334.8L456.0 335.9" stroke="#ff1000" opacity="0.94"/>
<path d="M456.0 335.9L453.1 336.5" stroke="#ff1000" opacity="0.77"/>
<path d="M453.1 336.5L450.0 336.4" stroke="#ff1000" opacity="0.91"/>
<path d="M450.0 336.4L446.5 336.7" stroke="#ff2800" opacity="0.97"/>
<path d="M446.5 336.7L443.5 337.2" stroke="#ff6000" opacity="0.84"/>
<path d="M443.5 337.2L440.8 336.2" stroke="#ff4000" opacity="0.81"/>
<path d="M440.8 336.2L437.8 336.0" stroke="#ff1000" opacity="0.91"/>
<path d="M437.8 336.0L434.1 335.2" stroke="#ff1000" opacity="0.79"/>
<path d="M434.1 335.2L431.2 334.4" stroke="#ff4000" opacity="0.88"/>
<path d="M431.2 334.4L428.1 332.3" stroke="#ff4000" opacity="1.00"/>
<path d="M428.1 332.3L425.2 331.3" stroke="#ff4000" opacity="0.97"/>
<path d="M425.2 331.3L422.9 329.1" stroke="#ff4000" opacity="0.93"/>
<path d="M422.9 329.1L419.4 326.9" stroke="#ff2800" opacity="0.93"/>
<path d="M419.4 326.9L417.2 324.2" stroke="#ff1000" opacity="0.91"/>
<path d="M417.2 324.2L414.7 322.5" stroke="#ff2800" opacity="0.91"/>
<path d="M414.7 322.5L412.2 319.6" stroke="#ff2800" opacity="0.88"/>
<path d="M412.2 319.6L409.4 317.0" stroke="#ff4000" opacity="0.97"/>
<path d="M409.4 317.0L406.6 313.2" stroke="#ff4000" opacity="0.86"/>
<path d="M406.6 313.2L404.2 309.7" stroke="#ff2000" opacity="1.00"/>
<path d="M404.2 309.7L402.7 306.2" stroke="#ff2000" opacity="0.88"/>
<path d="M402.7 306.2L400.6 302.8" stroke="#ff2000" opacity="0.91"/>
<path d="M400.6 302.8L398.8 299.3" stroke="#ff6000" opacity="0.85"/>
<path d="M398.8 299.3L396.9 295.5" stroke="#ff2000" opacity="0.99"/>
<path d="M396.9 295.5L394.6 290.8" stroke="#ff6000" opacity="0.89"/>
<path d="M506.2 288.8L504.0 293.7" stroke="#ff2800" opacity="0.91"/>
<path d="M504.0 293.7L502.0 298.2" stroke="#ff2000" opacity="0.86"/>
<path d="M502.0 298.2L500.1 302.5" stroke="#ff2800" opacity="0.97"/>
<path d="M500.1 302.5L498.6 306.2" stroke="#ff2800" opacity="0.96"/>
<path d="M498.6 306.2L495.8 309.6" stroke="#ff6000" opacity="0.99"/>
<path d="M495.8 309.6L493.8 313.7" stroke="#ff4000" opacity="0.92"/>
<path d="M493.8 313.7L491.4 317.1" stroke="#ff6000" opacity="0.94"/>
<path d="M491.4 317.1L488.2 320.2" stroke="#ff2000" opacity="0.82"/>
<path d="M488.2 320.2L486.3 323.6" stroke="#ff1000" opacity="0.81"/>
<path d="M486.3 323.6L483.3 326.4" stroke="#ff1000" opacity="0.81"/>
<path d="M483.3 326.4L479.9 328.6" stroke="#ff1000" opacity="0.99"/>
<path d="M479.9 328.6L476.9 331.3" stroke="#ff6000" opacity="0.91"/>
<path d="M476.9 331.3L473.6 333.7" stroke="#ff6000" opacity="0.97"/>
<path d="M473.6 333.7L470.7 335.9" stroke="#ff2800" opacity="0.92"/>
<path d="M470.7 335.9L467.4 336.9" stroke="#ff6000" opacity="0.82"/>
<path d="M467.4 336.9L464.3 338.6" stroke="#ff2800" opacity="0.87"/>
<path d="M464.3 338.6L461.0 339.6" stroke="#ff1000" opacity="0.76"/>
<path d="M461.0 339.6L456.9 340.5" stroke="#ff1000" opacity="0.78"/>
<path d="M456.9 340.5L453.9 341.2" stroke="#ff2800" opacity="0.89"/>
<path d="M453.9 341.2L450.6 341.6" stroke="#ff2800" opacity="0.77"/>
<path d="M450.6 341.6L447.2 342.4" stroke="#ff1000" opacity="0.76"/>
<path d="M447.2 342.4L443.9 341.4" stroke="#ff2800" opacity="0.81"/>
<path d="M443.9 341.4L439.7 341.5" stroke="#ff6000" opacity="0.95"/>
<path d="M439.7 341.5L436.3 340.9" stroke="#ff4000" opacity="0.87"/>
<path d="M436.3 340.9L433.4 339.5" stroke="#ff1000" opacity="0.82"/>
<path d="M433.4 339.5L429.8 338.7" stroke="#ff2000" opacity="0.95"/>
<path d="M429.8 338.7L426.2 337.1" stroke="#ff4000" opacity="0.90"/>
<path d="M426.2 337.1L423.4 335.1" stroke="#ff2000" opacity="0.76"/>
<path d="M423.4 335.1L419.8 333.4" stroke="#ff4000" opacity="0.83"/>
<path d="M419.8 333.4L416.9 331.8" stroke="#ff2000" opacity="0.79"/>
<path d="M416.9 331.8L414.3 328.6" stroke="#ff2000" opacity="0.76"/>
<path d="M414.3 328.6L410.6 325.9" stroke="#ff4000" opacity="0.92"/>
<path d="M410.6 325.9L408.4 323.6" stroke="#ff6000" opacity="1.00"/>
<path d="M408.4 323.6L405.8 320.1" stroke="#ff2000" opacity="0.96"/>
<path d="M405.8 320.1L402.5 317.3" stroke="#ff1000" opacity="0.93"/>
<path d="M402.5 317.3L399.9 313.6" stroke="#ff1000" opacity="0.76"/>
<path d="M399.9 313.6L398.1 309.5" stroke="#ff4000" opacity="0.79"/>
<path d="M398.1 309.5L395.4 306.0" stroke="#ff6000" opacity="0.84"/>
<path d="M395.4 306.0L393.5 302.2" stroke="#ff2000" opacity="0.83"/>
<path d="M393.5 302.2L392.0 297.6" stroke="#ff6000" opacity="0.82"/>
<path d="M392.0 297.6L389.6 293.7" stroke="#ff1000" opacity="0.79"/>
<path d="M389.6 293.7L388.6 289.2" stroke="#ff4000" opacity="0.77"/>
<path d="M511.2 291.3L509.4 295.6" stroke="#ff4000" opacity="0.91"/>
<path d="M509.4 295.6L507.2 300.1" stroke="#ff6000" opacity="0.82"/>
<path d="M507.2 300.1L505.6 305.2" stroke="#ff4000" opacity="0.94"/>
<path d="M505.6 305.2L503.0 309.0" stroke="#ff2800" opacity="0.84"/>
<path d="M503.0 309.0L500.3 313.0" stroke="#ff2000" opacity="0.97"/>
<path d="M500.3 313.0L498.1 317.0" stroke="#ff2000" opacity="0.77"/>
<path d="M498.1 317.0L495.6 320.9" stroke="#ff4000" opacity="0.90"/>
<path d="M495.6 320.9L492.1 324.5" stroke="#ff2000" opacity="0.87"/>
<path d="M492.1 324.5L489.8 327.2" stroke="#ff1000" opacity="0.75"/>
<path d="M489.8 327.2L486.4 330.7" stroke="#ff2000" opacity="0.83"/>
<path d="M486.4 330.7L483.1 333.1" stroke="#ff6000" opacity="0.78"/>
<path d="M483.1 333.1L479.7 335.8" stroke="#ff1000" opacity="0.81"/>
<path d="M479.7 335.8L476.5 338.1" stroke="#ff1000" opacity="0.94"/>
<path d="M476.5 338.1L473.1 340.5" stroke="#ff2000" opacity="0.77"/>
<path d="M473.1 340.5L469.3 341.8" stroke="#ff2000" opacity="0.81"/>
<path d="M469.3 341.8L465.5 343.4" stroke="#ff2000" opacity="0.81"/>
<path d="M465.5 343.4L462.4 344.3" stroke="#ff4000" opacity="0.83"/>
<path d="M462.4 344.3L458.6 345.9" stroke="#ff6000" opacity="0.76"/>
<path d="M458.6 345.9L454.3 346.0" stroke="#ff2800" opacity="0.99"/>
<path d="M454.3 346.0L451.2 346.7" stroke="#ff4000" opacity="0.78"/>
<path d="M451.2 346.7L446.9 347.2" stroke="#ff2800" opacity="0.85"/>
<path d="M446.9 347.2L443.0 347.4" stroke="#ff4000" opacity="0.79"/>
<path d="M443.0 347.4L439.4 346.5" stroke="#ff4000" opacity="0.84"/>
<path d="M439.4 346.5L435.8 345.7" stroke="#ff4000" opacity="0.97"/>
<path d="M435.8 345.7L432.4 344.9" stroke="#ff2800" opacity="0.86"/>
<path d="M432.4 344.9L428.6 343.2" stroke="#ff4000" opacity="0.96"/>
<path d="M428.6 343.2L424.7 341.5" stroke="#ff4000" opacity="0.81"/>
<path d="M424.7 341.5L421.6 340.7" stroke="#ff2800" opacity="0.87"/>
<path d="M421.6 340.7L417.9 338.0" stroke="#ff4000" opacity="0.91"/>
<path d="M417.9 338.0L414.0 336.3" stroke="#ff6000" opacity="0.82"/>
<path d="M414.0 336.3L411.2 332.9" stroke="#ff2000" opacity="0.85"/>
<path d="M411.2 332.9L407.7 330.4" stroke="#ff2800" opacity="0.78"/>
<path d="M407.7 330.4L405.0 327.9" stroke="#ff2000" opacity="0.97"/>
<path d="M405.0 327.9L401.6 323.8" stroke="#ff6000" opacity="0.81"/>
<path d="M401.6 323.8L399.1 320.7" stroke="#ff4000" opacity="0.98"/>
<path d="M399.1 320.7L396.5 317.1" stroke="#ff2800" opacity="0.79"/>
<path d="M396.5 317.1L393.2 313.6" stroke="#ff6000" opacity="0.88"/>
<path d="M393.2 313.6L391.2 309.3" stroke="#ff2800" opacity="0.80"/>
<path d="M391.2 309.3L388.4 305.0" stroke="#ff4000" opacity="0.95"/>
<path d="M388.4 305.0L387.0 301.0" stroke="#ff2800" opacity="0.77"/>
<path d="M387.0 301.0L385.1 296.2" stroke="#ff2800" opacity="0.85"/>
<path d="M385.1 296.2L382.7 290.8" stroke="#ff2000" opacity="0.81"/>
<path d="M518.0 288.3L516.4 294.1" stroke="#ff2000" opacity="0.83"/>
<path d="M516.4 294.1L514.4 298.5" stroke="#ff6000" opacity="0.91"/>
<path d="M514.4 298.5L512.3 303.4" stroke="#ff6000" opacity="0.84"/>
<path d="M512.3 303.4L510.2 308.3" stroke="#ff2800" opacity="0.90"/>
<path d="M510.2 308.3L507.2 312.2" stroke="#ff6000" opacity="0.94"/>
<path d="M507.2 312.2L505.2 316.8" stroke="#ff6000" opacity="0.90"/>
<path d="M505.2 316.8L501.9 321.1" stroke="#ff6000" opacity="0.87"/>
<path d="M501.9 321.1L498.9 324.5" stroke="#ff6000" opacity="0.91"/>
<path d="M498.9 324.5L496.3 328.3" stroke="#ff2000" opacity="0.94"/>
<path d="M496.3 328.3L493.3 331.9" stroke="#ff1000" opacity="0.87"/>
<path d="M493.3 331.9L489.5 334.4" stroke="#ff4000" opacity="0.79"/>
<path d="M489.5 334.4L486.0 337.3" stroke="#ff4000" opacity="0.94"/>
<path d="M486.0 337.3L482.6 339.9" stroke="#ff4000" opacity="0.96"/>
<path d="M482.6 339.9L478.3 342.9" stroke="#ff4000" opacity="0.86"/>
<path d="M478.3 342.9L474.5 344.6" stroke="#ff1000" opacity="0.83"/>
<path d="M474.5 344.6L471.0 346.5" stroke="#ff6000" opacity="0.77"/>
<path d="M471.0 346.5L467.3 348.5" stroke="#ff6000" opacity="0.89"/>
<path d="M467.3 348.5L463.7 349.5" stroke="#ff2800" opacity="0.94"/>
<path d="M463.7 349.5L459.7 350.8" stroke="#ff6000" opacity="0.77"/>
<path d="M459.7 350.8L455.2 351.6" stroke="#ff1000" opacity="0.96"/>
<path d="M455.2 351.6L451.5 351.8" stroke="#ff1000" opacity="0.87"/>
<path d="M451.5 351.8L447.2 352.3" stroke="#ff6000" opacity="0.82"/>
<path d="M447.2 352.3L442.7 352.3" stroke="#ff2000" opacity="0.84"/>
<path d="M442.7 352.3L438.5 351.5" stroke="#ff4000" opacity="0.98"/>
<path d="M438.5 351.5L435.1 351.0" stroke="#ff4000" opacity="0.79"/>
<path d="M435.1 351.0L430.8 349.6" stroke="#ff2800" opacity="0.87"/>
<path d="M430.8 349.6L426.6 348.2" stroke="#ff6000" opacity="0.84"/>
<path d="M426.6 348.2L422.6 346.7" stroke="#ff2000" opacity="0.76"/>
<path d="M422.6 346.7L419.3 345.3" stroke="#ff1000" opacity="0.90"/>
<path d="M419.3 345.3L414.9 342.7" stroke="#ff4000" opacity="0.92"/>
<path d="M414.9 342.7L411.9 340.8" stroke="#ff1000" opacity="0.92"/>
<path d="M411.9 340.8L408.2 337.3" stroke="#ff1000" opacity="0.82"/>
<path d="M408.2 337.3L404.5 334.5" stroke="#ff1000" opacity="0.93"/>
<path d="M404.5 334.5L401.0 331.5" stroke="#ff6000" opacity="0.76"/>
<path d="M401.0 331.5L398.4 328.0" stroke="#ff6000" opacity="0.86"/>
<path d="M398.4 328.0L394.3 324.8" stroke="#ff2000" opacity="0.80"/>
<path d="M394.3 324.8L391.9 320.4" stroke="#ff2800" opacity="0.79"/>
<path d="M391.9 320.4L389.5 316.3" stroke="#ff4000" opacity="0.84"/>
<path d="M389.5 316.3L386.7 311.9" stroke="#ff2800" opacity="1.00"/>
<path d="M386.7 311.9L384.1 307.6" stroke="#ff6000" opacity="0.88"/>
<path d="M384.1 307.6L381.9 303.4" stroke="#ff1000" opacity="0.81"/>
<path d="M381.9 303.4L379.0 298.0" stroke="#ff4000" opacity="0.93"/>
<path d="M379.0 298.0L377.4 293.8" stroke="#ff2000" opacity="0.88"/>
<path d="M377.4 293.8L375.8 288.5" stroke="#ff6000" opacity="0.86"/>
<path d="M523.6 290.7L522.2 295.8" stroke="#ff2800" opacity="0.76"/>
<path d="M522.2 295.8L519.4 301.1" stroke="#ff2000" opacity="0.97"/>
<path d="M519.4 301.1L517.1 306.3" stroke="#ff2000" opacity="1.00"/>
<path d="M517.1 306.3L514.6 310.5" stroke="#ff1000" opacity="0.97"/>
<path d="M514.6 310.5L512.4 315.7" stroke="#ff1000" opacity="0.78"/>
<path d="M512.4 315.7L509.5 319.6" stroke="#ff1000" opacity="0.99"/>
<path d="M509.5 319.6L506.1 324.2" stroke="#ff2000" opacity="0.95"/>
<path d="M506.1 324.2L503.5 328.7" stroke="#ff1000" opacity="0.94"/>
<path d="M503.5 328.7L499.9 332.4" stroke="#ff1000" opacity="0.83"/>
<path d="M499.9 332.4L496.5 335.4" stroke="#ff6000" opacity="0.83"/>
<path d="M496.5 335.4L492.6 339.1" stroke="#ff2000" opacity="0.90"/>
<path d="M492.6 339.1L489.3 341.8" stroke="#ff6000" opacity="0.84"/>
<path d="M489.3 341.8L485.2 344.9" stroke="#ff2800" opacity="0.92"/>
<path d="M485.2 344.9L481.4 347.2" stroke="#ff6000" opacity="0.84"/>
<path d="M481.4 347.2L477.0 349.3" stroke="#ff6000" opacity="0.93"/>
<path d="M477.0 349.3L473.4 351.9" stroke="#ff2000" opacity="0.87"/>
<path d="M473.4 351.9L469.0 353.1" stroke="#ff6000" opacity="0.77"/>
<path d="M469.0 353.1L464.3 354.9" stroke="#ff6000" opacity="0.91"/>
<path d="M464.3 354.9L460.1 355.2" stroke="#ff2000" opacity="0.95"/>
<path d="M460.1 355.2L455.3 356.6" stroke="#ff2000" opacity="0.83"/>
<path d="M455.3 356.6L451.3 357.2" stroke="#ff4000" opacity="0.83"/>
<path d="M451.3 357.2L447.0 356.9" stroke="#ff4000" opacity="0.85"/>
<path d="M447.0 356.9L443.0 356.7" stroke="#ff2800" opacity="0.83"/>
<path d="M443.0 356.7L438.5 356.0" stroke="#ff4000" opacity="0.90"/>
<path d="M438.5 356.0L434.3 355.2" stroke="#ff6000" opacity="0.86"/>
<path d="M434.3 355.2L429.1 354.3" stroke="#ff2800" opacity="0.88"/>
<path d="M429.1 354.3L425.2 353.1" stroke="#ff6000" opacity="0.81"/>
<path d="M425.2 353.1L421.5 351.7" stroke="#ff6000" opacity="0.77"/>
<path d="M421.5 351.7L416.4 349.9" stroke="#ff6000" opacity="0.91"/>
<path d="M416.4 349.9L413.2 347.0" stroke="#ff2800" opacity="0.83"/>
<path d="M413.2 347.0L408.9 344.7" stroke="#ff2800" opacity="0.88"/>
<path d="M408.9 344.7L405.4 342.1" stroke="#ff2000" opacity="0.99"/>
<path d="M405.4 342.1L401.0 339.2" stroke="#ff6000" opacity="0.97"/>
<path d="M401.0 339.2L397.5 335.5" stroke="#ff6000" opacity="0.88"/>
<path d="M397.5 335.5L394.4 332.2" stroke="#ff6000" opacity="0.90"/>
<path d="M394.4 332.2L390.8 328.4" stroke="#ff6000" opacity="0.76"/>
<path d="M390.8 328.4L388.0 324.2" stroke="#ff2800" opacity="0.89"/>
<path d="M388.0 324.2L384.9 319.7" stroke="#ff1000" opacity="0.96"/>
<path d="M384.9 319.7L382.2 315.1" stroke="#ff6000" opacity="0.84"/>
<path d="M382.2 315.1L379.3 311.1" stroke="#ff2800" opacity="0.93"/>
<path d="M379.3 311.1L376.5 306.2" stroke="#ff6000" opacity="0.85"/>
<path d="M376.5 306.2L373.9 301.3" stroke="#ff1000" opacity="0.84"/>
<path d="M373.9 301.3L372.6 295.8" stroke="#ff2800" opacity="0.85"/>
<path d="M372.6 295.8L370.1 290.5" stroke="#ff2800" opacity="0.94"/>
<path d="M529.1 292.5L527.5 298.4" stroke="#ff2800" opacity="0.88"/>
<path d="M527.5 298.4L524.8 303.1" stroke="#ff6000" opacity="0.85"/>
<path d="M524.8 303.1L522.5 308.7" stroke="#ff2000" opacity="0.76"/>
<path d="M522.5 308.7L519.6 313.6" stroke="#ff1000" opacity="0.76"/>
<path d="M519.6 313.6L516.8 318.6" stroke="#ff1000" opacity="0.81"/>
<path d="M516.8 318.6L514.4 323.5" stroke="#ff4000" opacity="0.92"/>
<path d="M514.4 323.5L511.0 327.8" stroke="#ff1000" opacity="0.92"/>
<path d="M511.0 327.8L507.7 331.8" stroke="#ff1000" opacity="0.96"/>
<path d="M507.7 331.8L503.4 336.2" stroke="#ff4000" opacity="0.95"/>
<path d="M503.4 336.2L499.8 339.9" stroke="#ff4000" opacity="1.00"/>
<path d="M499.8 339.9L496.4 342.6" stroke="#ff1000" opacity="0.76"/>
<path d="M496.4 342.6L491.9 346.4" stroke="#ff1000" opacity="0.89"/>
<path d="M491.9 346.4L487.5 348.9" stroke="#ff2000" opacity="0.96"/>
<path d="M487.5 348.9L483.9 351.9" stroke="#ff4000" opacity="0.99"/>
<path d="M483.9 351.9L479.0 354.3" stroke="#ff2000" opacity="0.82"/>
<path d="M479.0 354.3L475.1 356.3" stroke="#ff2800" opacity="0.80"/>
<path d="M475.1 356.3L469.9 358.0" stroke="#ff4000" opacity="0.99"/>
<path d="M469.9 358.0L466.0 359.4" stroke="#ff2800" opacity="0.92"/>
<path d="M466.0 359.4L461.3 361.0" stroke="#ff2800" opacity="1.00"/>
<path d="M461.3 361.0L456.4 361.5" stroke="#ff6000" opacity="0.91"/>
<path d="M456.4 361.5L451.9 361.8" stroke="#ff4000" opacity="0.78"/>
<path d="M451.9 361.8L447.4 361.5" stroke="#ff2800" opacity="0.99"/>
<path d="M447.4 361.5L442.7 361.6" stroke="#ff4000" opacity="0.90"/>
<path d="M442.7 361.6L438.0 361.2" stroke="#ff6000" opacity="0.76"/>
<path d="M438.0 361.2L433.0 360.5" stroke="#ff4000" opacity="0.87"/>
<path d="M433.0 360.5L428.4 359.3" stroke="#ff6000" opacity="0.80"/>
<path d="M428.4 359.3L423.5 357.9" stroke="#ff6000" opacity="0.76"/>
<path d="M423.5 357.9L418.9 355.9" stroke="#ff2800" opacity="0.81"/>
<path d="M418.9 355.9L414.2 354.1" stroke="#ff2000" opacity="0.86"/>
<path d="M414.2 354.1L410.7 352.2" stroke="#ff1000" opacity="0.82"/>
<path d="M410.7 352.2L406.2 349.1" stroke="#ff4000" opacity="1.00"/>
<path d="M406.2 349.1L402.3 346.1" stroke="#ff6000" opacity="0.80"/>
<path d="M402.3 346.1L398.3 343.0" stroke="#ff4000" opacity="0.78"/>
<path d="M398.3 343.0L393.6 339.4" stroke="#ff2800" opacity="0.77"/>
<path d="M393.6 339.4L390.6 335.7" stroke="#ff2000" opacity="0.88"/>
<path d="M390.6 335.7L387.0 332.1" stroke="#ff2800" opacity="0.99"/>
<path d="M387.0 332.1L382.9 327.6" stroke="#ff6000" opacity="0.90"/>
<path d="M382.9 327.6L380.2 323.7" stroke="#ff2000" opacity="0.80"/>
<path d="M380.2 323.7L376.6 318.7" stroke="#ff2800" opacity="1.00"/>
<path d="M376.6 318.7L374.4 313.5" stroke="#ff2800" opacity="0.98"/>
<path d="M374.4 313.5L372.0 309.1" stroke="#ff6000" opacity="0.79"/>
<path d="M372.0 309.1L368.7 303.9" stroke="#ff2000" opacity="0.79"/>
<path d="M368.7 303.9L366.6 298.4" stroke="#ff4000" opacity="0.99"/>
<path d="M366.6 298.4L365.1 292.1" stroke="#ff1000" opacity="0.84"/>
</g>
<path d="M397.5 290 V375" stroke="#ff8000" stroke-width="3" opacity="0.7"/>
<path d="M316.5 335 V375" stroke="#ffc000" stroke-width="3" opacity="0.85"/>
<path d="M319 345 V375" stroke="#ffff00" stroke-width="1.5" opacity="0.7"/>
<path d="M352.5 290 V375 M360.5 300 V375" stroke="#80ff00" stroke-width="1" opacity="0.6"/>
<path d="M530.5 265 V375 M537 290 V375 M543 300 V375" stroke="#20ff00" stroke-width="2" opacity="0.55" stroke-dasharray="3 2"/>
<path d="M679 330 V375" stroke="#80ff00" stroke-width="2" opacity="0.6" stroke-dasharray="3 2"/>
<rect x="366" y="332" width="4" height="4" fill="#f0f000" opacity="0.8"/>
<rect x="366" y="338" width="18" height="4" fill="#f0f000" opacity="0.8"/>
<rect x="367" y="344" width="16" height="3" fill="#f0f000" opacity="0.8"/>
<rect x="514" y="333" width="4" height="4" fill="#f0f000" opacity="0.8"/>
<rect x="535" y="343" width="16" height="4" fill="#f0f000" opacity="0.8"/>
<rect x="678" y="335" width="2" height="4" fill="#f0f000" opacity="0.8"/>
<rect x="678" y="350" width="2" height="5" fill="#f0f000" opacity="0.8"/>
</g>
<rect x="219.5" y="197.5" width="469" height="180" fill="none" stroke="#000" stroke-width="1"/>
<rect x="220" y="198" width="468" height="5" fill="#fff"/>
<rect x="220" y="375" width="468" height="2" fill="#fff"/>
<text x="317.4" y="186.6" font-size="15.8" font-weight="normal" fill="#000" text-anchor="start" textLength="273.3" lengthAdjust="spacingAndGlyphs" >RBSP-A/EMFISIS&#160; HFR Spectra Data</text>
<path d="M208.5 374.5 H219.5 M214.5 344.5 H219.5 M214.5 326.5 H219.5 M214.5 314.5 H219.5 M214.5 304.5 H219.5 M214.5 296.5 H219.5 M214.5 289.5 H219.5 M214.5 283.5 H219.5 M214.5 278.5 H219.5 M208.5 273.5 H219.5 M214.5 243.5 H219.5 M214.5 225.5 H219.5 M214.5 213.5 H219.5 M214.5 203.5 H219.5 M220.5 377.5 V382.5 M238.5 377.5 V388.5 M256.5 377.5 V382.5 M274.5 377.5 V382.5 M292.5 377.5 V382.5 M310.5 377.5 V382.5 M328.5 377.5 V382.5 M346.5 377.5 V382.5 M364.5 377.5 V382.5 M382.5 377.5 V382.5 M400.5 377.5 V382.5 M418.5 377.5 V382.5 M436.5 377.5 V382.5 M454.5 377.5 V388.5 M472.5 377.5 V382.5 M490.5 377.5 V382.5 M508.5 377.5 V382.5 M526.5 377.5 V382.5 M544.5 377.5 V382.5 M562.5 377.5 V382.5 M580.5 377.5 V382.5 M598.5 377.5 V382.5 M616.5 377.5 V382.5 M634.5 377.5 V382.5 M652.5 377.5 V382.5 M670.5 377.5 V388.5 M688.5 377.5 V382.5" stroke="#000" stroke-width="1" fill="none"/>
<text x="175" y="282.7" font-size="15.8" font-weight="normal" fill="#000" text-anchor="start" textLength="17" lengthAdjust="spacingAndGlyphs" >10</text>
<text x="194.3" y="274.9" font-size="15.8" font-weight="normal" fill="#000" text-anchor="start" textLength="7.7" lengthAdjust="spacingAndGlyphs" >5</text>
<text x="174.5" y="383.9" font-size="15.8" font-weight="normal" fill="#000" text-anchor="start" textLength="17.6" lengthAdjust="spacingAndGlyphs" >10</text>
<text x="193.9" y="375.9" font-size="15.8" font-weight="normal" fill="#000" text-anchor="start" textLength="8.9" lengthAdjust="spacingAndGlyphs" >4</text>
<text transform="translate(161.2,296.8) rotate(-90)" font-size="15.8" textLength="18.9" lengthAdjust="spacingAndGlyphs">Hz</text>
<text x="216.9" y="409" font-size="15.8" font-weight="normal" fill="#000" text-anchor="start" textLength="43" lengthAdjust="spacingAndGlyphs" >00:00</text>
<text x="216.9" y="425" font-size="15.8" font-weight="normal" fill="#000" text-anchor="start" textLength="90.4" lengthAdjust="spacingAndGlyphs" >2012-12-02</text>
<text x="648.9" y="409" font-size="15.8" font-weight="normal" fill="#000" text-anchor="start" textLength="43.1" lengthAdjust="spacingAndGlyphs" >00:00</text>
<text x="648.9" y="425" font-size="15.8" font-weight="normal" fill="#000" text-anchor="start" textLength="90.4" lengthAdjust="spacingAndGlyphs" >2012-12-03</text>
<text x="295.5" y="413.5" font-size="15.8" font-weight="normal" fill="#000" text-anchor="start" textLength="100" lengthAdjust="spacingAndGlyphs" >RBSP-A/HOPE</text>
<text x="611" y="413.5" font-size="15.8" font-weight="normal" fill="#000" text-anchor="end" textLength="34.5" lengthAdjust="spacingAndGlyphs" >Tpar</text>
<rect x="704" y="198" width="16.5" height="179.5" fill="url(#cbar)"/>
<path d="M720.5 197.5 V377.5 M720.5 377.5 H731.5 M720.5 363.5 H725.5 M720.5 350.5 H731.5 M720.5 337.5 H725.5 M720.5 323.5 H731.5 M720.5 310.5 H725.5 M720.5 297.5 H731.5 M720.5 284.5 H725.5 M720.5 270.5 H731.5 M720.5 257.5 H725.5 M720.5 244.5 H731.5 M720.5 230.5 H725.5 M720.5 217.5 H731.5 M720.5 204.5 H725.5" stroke="#000" stroke-width="1" fill="none"/>
<text x="737.7" y="386.5" font-size="15.8" font-weight="normal" fill="#000" text-anchor="start" textLength="17.5" lengthAdjust="spacingAndGlyphs" >10</text>
<text x="757" y="378.7" font-size="15.8" font-weight="normal" fill="#000" text-anchor="start" textLength="24" lengthAdjust="spacingAndGlyphs" >-22</text>
<text x="737.7" y="359.5" font-size="15.8" font-weight="normal" fill="#000" text-anchor="start" textLength="17.5" lengthAdjust="spacingAndGlyphs" >10</text>
<text x="757" y="351.7" font-size="15.8" font-weight="normal" fill="#000" text-anchor="start" textLength="24" lengthAdjust="spacingAndGlyphs" >-20</text>
<text x="737.7" y="332.5" font-size="15.8" font-weight="normal" fill="#000" text-anchor="start" textLength="17.5" lengthAdjust="spacingAndGlyphs" >10</text>
<text x="757" y="324.7" font-size="15.8" font-weight="normal" fill="#000" text-anchor="start" textLength="24" lengthAdjust="spacingAndGlyphs" >-18</text>
<text x="737.7" y="306.5" font-size="15.8" font-weight="normal" fill="#000" text-anchor="start" textLength="17.5" lengthAdjust="spacingAndGlyphs" >10</text>
<text x="757" y="298.7" font-size="15.8" font-weight="normal" fill="#000" text-anchor="start" textLength="24" lengthAdjust="spacingAndGlyphs" >-16</text>
<text x="737.7" y="279.5" font-size="15.8" font-weight="normal" fill="#000" text-anchor="start" textLength="17.5" lengthAdjust="spacingAndGlyphs" >10</text>
<text x="757" y="271.7" font-size="15.8" font-weight="normal" fill="#000" text-anchor="start" textLength="24" lengthAdjust="spacingAndGlyphs" >-14</text>
<text x="737.7" y="253.5" font-size="15.8" font-weight="normal" fill="#000" text-anchor="start" textLength="17.5" lengthAdjust="spacingAndGlyphs" >10</text>
<text x="757" y="245.70000000000002" font-size="15.8" font-weight="normal" fill="#000" text-anchor="start" textLength="24" lengthAdjust="spacingAndGlyphs" >-12</text>
<text x="737.7" y="226.5" font-size="15.8" font-weight="normal" fill="#000" text-anchor="start" textLength="17.5" lengthAdjust="spacingAndGlyphs" >10</text>
<text x="757" y="218.70000000000002" font-size="15.8" font-weight="normal" fill="#000" text-anchor="start" textLength="24" lengthAdjust="spacingAndGlyphs" >-10</text>
<text transform="translate(805,339.6) rotate(-90)" font-size="15.8" textLength="102.6" lengthAdjust="spacingAndGlyphs">V^2/m^2/Hz</text>
<g clip-path="url(#tsclip)"><path d="M220.5 490V518M221.5 491V535M222.5 491V525M223.5 495V521M224.5 477V510M225.5 484V503M226.5 472V498M227.5 470V496M228.5 470V485M229.5 475V488M230.5 475V490M231.5 473V488M232.5 456V485M233.5 463V478M234.5 463V493M235.5 478V505M236.5 472V506M237.5 472V502M238.5 480V507M239.5 484V499M240.5 491V507M241.5 501V516M242.5 500V519M243.5 508V516M244.5 508V520M245.5 508V532M246.5 526V536M247.5 524V539M248.5 524V542M249.5 527V541M250.5 527V542M251.5 535V543M252.5 535V548M253.5 537V548M254.5 541V553M255.5 543V555M256.5 550V556M257.5 556V565M258.5 554V566M259.5 553V566M260.5 557V566M261.5 557V561M262.5 552V560M263.5 551V561M264.5 551V562M265.5 553V565M266.5 558V564M267.5 558V567M268.5 558V568M269.5 560V568M270.5 563V572M271.5 567V573M272.5 565V573M273.5 567V574M274.5 570V577M275.5 570V579M276.5 569V578M277.5 568V577M278.5 568V576M279.5 568V581M280.5 573V578M281.5 570V583M282.5 570V583M283.5 569V579M284.5 566V580M285.5 566V579M286.5 568V580M287.5 566V577M288.5 566V578M289.5 564V576M290.5 565V573M291.5 564V578M292.5 565V576M293.5 570V582M294.5 569V581M295.5 565V581M296.5 565V579M297.5 563V579M298.5 555V579M299.5 552V571M300.5 550V563M301.5 550V568M302.5 558V570M303.5 547V570M304.5 548V561M305.5 549V558M306.5 540V555M307.5 543V562M308.5 542V554M309.5 548V556M310.5 545V565M311.5 552V564M312.5 551V569M313.5 554V572M314.5 557V571M315.5 549V566M316.5 546V562M317.5 549V560M318.5 543V552M319.5 544V551M320.5 539V549M321.5 535V544M322.5 533V544M323.5 526V542M324.5 522V537M325.5 516V532M326.5 517V528M327.5 512V526M328.5 510V526M329.5 508V524M330.5 505V519M331.5 491V512M332.5 481V509M333.5 491V512M334.5 466V501M335.5 466V507M336.5 468V504M337.5 484V503M338.5 471V501M339.5 471V504M340.5 479V497M341.5 476V500M342.5 484V500M343.5 495V503M344.5 471V504M345.5 477V505M346.5 472V503M347.5 472V506M348.5 465V506M349.5 469V498M350.5 472V500M351.5 475V515M352.5 479V506M353.5 483V529M354.5 483V537M355.5 506V538M356.5 505V538M357.5 498V519M358.5 504V538M359.5 504V554M360.5 526V552M373.5 507V531M374.5 495V514M375.5 476V502M376.5 476V499M377.5 485V498M378.5 474V498M379.5 482V500M380.5 476V489M381.5 472V501M382.5 470V501M383.5 479V493M384.5 473V494M385.5 470V493M386.5 460V495M387.5 462V495M388.5 459V485M389.5 454V487M390.5 454V488M391.5 467V501M392.5 472V511M393.5 482V518M394.5 477V495M395.5 470V482M396.5 449V471M397.5 456V481M398.5 464V484M399.5 465V483M400.5 467V488M401.5 479V486M402.5 481V490M403.5 486V503M404.5 481V501M405.5 481V500M406.5 479V494M407.5 478V495M408.5 478V502M409.5 485V502M410.5 483V495M411.5 472V495M412.5 467V480M413.5 467V486M414.5 469V482M415.5 470V488M416.5 474V483M417.5 477V492M418.5 486V493M419.5 478V492M420.5 483V492M421.5 481V493M422.5 486V493M423.5 484V498M424.5 490V504M425.5 486V506M426.5 493V507M427.5 489V504M428.5 493V508M429.5 492V510M430.5 492V513M431.5 494V505M432.5 499V513M433.5 493V510M434.5 500V511M435.5 493V513M436.5 500V513M437.5 498V507M438.5 498V512M439.5 492V515M440.5 493V518M441.5 501V515M442.5 495V514M443.5 492V507M444.5 491V509M445.5 491V507M446.5 491V512M447.5 494V512M448.5 498V506M449.5 496V507M450.5 493V506M451.5 496V509M452.5 493V508M453.5 502V514M454.5 492V514M455.5 485V508M456.5 476V504M457.5 474V504M458.5 475V501M459.5 475V501M460.5 487V507M461.5 492V511M462.5 493V512M463.5 491V517M464.5 492V513M465.5 496V511M466.5 499V517M467.5 505V514M468.5 502V526M469.5 505V526M470.5 510V529M471.5 506V529M472.5 508V520M473.5 504V522M474.5 496V523M475.5 494V514M476.5 494V514M477.5 491V516M478.5 483V506M479.5 492V505M480.5 487V505M481.5 495V509M482.5 489V513M483.5 492V525M484.5 495V532M485.5 505V524M486.5 504V551M487.5 519V552M488.5 505V550M489.5 505V525M490.5 494V537M491.5 513V531M492.5 487V527M493.5 483V521M494.5 480V524M495.5 480V503M496.5 474V508M497.5 487V520M498.5 474V516M499.5 482V501M500.5 477V501M501.5 489V501M502.5 489V499M503.5 481V497M504.5 482V508M505.5 479V508M506.5 479V505M507.5 483V500M508.5 483V500M509.5 471V502M510.5 464V494M511.5 464V493M512.5 470V494M513.5 484V516M514.5 488V524M515.5 488V528M516.5 504V539M517.5 510V529M518.5 495V550M519.5 515V546M520.5 523V555M521.5 536V561M522.5 542V563M534.5 523V542M535.5 523V538M536.5 514V546M537.5 503V535M538.5 499V528M539.5 499V528M540.5 487V515M541.5 494V519M542.5 483V519M543.5 483V511M544.5 469V507M545.5 465V507M546.5 471V499M547.5 465V499M548.5 465V504M549.5 461V498M550.5 477V498M551.5 473V501M552.5 474V501M553.5 492V500M554.5 496V514M555.5 503V535M556.5 503V529M557.5 518V537M558.5 513V554M559.5 534V554M560.5 523V543M561.5 522V542M562.5 530V563M563.5 532V553M564.5 529V563M565.5 529V571M566.5 531V565M567.5 537V561M568.5 537V583M569.5 546V588M570.5 547V592M571.5 550V591M572.5 550V580M573.5 571V605M574.5 579V587M575.5 575V603M576.5 579V603M577.5 570V600M578.5 573V595M579.5 573V594M580.5 582V602M581.5 579V594M582.5 582V597M583.5 576V601M584.5 578V597M585.5 578V601M586.5 580V598M587.5 578V599M588.5 588V598M589.5 588V601M590.5 579V604M591.5 586V597M592.5 581V599M593.5 585V603M594.5 581V603M595.5 580V603M596.5 585V608M597.5 580V613M598.5 580V611M599.5 592V609M600.5 582V605M601.5 582V595M602.5 582V596M603.5 579V596M604.5 582V595M605.5 575V591M606.5 575V598M607.5 584V596M608.5 570V596M609.5 577V594M610.5 580V592M611.5 569V586M612.5 573V583M613.5 575V593M614.5 575V586M615.5 572V592M616.5 576V592M617.5 570V592M618.5 570V584M619.5 566V577M620.5 564V581M621.5 568V584M622.5 562V580M623.5 568V585M624.5 564V580M625.5 565V577M626.5 560V578M627.5 560V577M628.5 557V565M629.5 557V570M630.5 551V570M631.5 551V566M632.5 550V561M633.5 549V562M634.5 537V561M635.5 539V548M636.5 529V553M637.5 532V536M638.5 520V539M639.5 520V538M640.5 526V546M641.5 529V564M642.5 529V575M643.5 544V575M644.5 556V587M645.5 558V585M646.5 563V585M647.5 558V591M648.5 555V591M649.5 548V582M650.5 549V582M651.5 549V574M652.5 553V582M653.5 554V590M654.5 551V590M655.5 544V580M656.5 539V567M657.5 531V572M658.5 527V561M659.5 552V565M660.5 522V564M661.5 520V555M662.5 520V542M663.5 516V547M664.5 532V544M665.5 510V542M666.5 521V542M667.5 507V547M668.5 507V566M669.5 526V574M670.5 497V562M671.5 489V543M672.5 523V547M673.5 498V544M674.5 490V532M675.5 501V523M676.5 516V536M677.5 504V523M678.5 500V525M679.5 500V521M680.5 516V542M681.5 509V551M682.5 512V537M683.5 527V560M684.5 538V581M685.5 548V584M359.5 520V560M360.5 525V579M373.5 505V550M374.5 490V530M521.5 535V563M522.5 541V563M534.5 527V577M535.5 515V560M685.5 557V585M684.5 545V580M669.5 487V596M389.5 448V492M396.5 448V480M511.5 458V490M487.5 500V559M220.5 480V545M221.5 470V535M334.5 460V505M549.5 461V500M598.5 590V614M593.5 580V606M355.5 495V541" stroke="#000" stroke-width="1" fill="none" shape-rendering="crispEdges"/></g>
<rect x="219.5" y="440.5" width="469" height="181" fill="none" stroke="#000" stroke-width="1"/>
<path d="M214.5 621.5 H219.5 M208.5 599.5 H219.5 M214.5 580.5 H219.5 M208.5 562.5 H219.5 M214.5 545.5 H219.5 M208.5 529.5 H219.5 M214.5 514.5 H219.5 M208.5 500.5 H219.5 M214.5 487.5 H219.5 M208.5 474.5 H219.5 M214.5 462.5 H219.5 M208.5 451.5 H219.5 M214.5 440.5 H219.5 M220.5 621.5 V626.5 M238.5 621.5 V632.5 M256.5 621.5 V626.5 M274.5 621.5 V626.5 M292.5 621.5 V626.5 M310.5 621.5 V626.5 M328.5 621.5 V626.5 M346.5 621.5 V626.5 M364.5 621.5 V626.5 M382.5 621.5 V626.5 M400.5 621.5 V626.5 M418.5 621.5 V626.5 M436.5 621.5 V626.5 M454.5 621.5 V632.5 M472.5 621.5 V626.5 M490.5 621.5 V626.5 M508.5 621.5 V626.5 M526.5 621.5 V626.5 M544.5 621.5 V626.5 M562.5 621.5 V626.5 M580.5 621.5 V626.5 M598.5 621.5 V626.5 M616.5 621.5 V626.5 M634.5 621.5 V626.5 M652.5 621.5 V626.5 M670.5 621.5 V632.5 M688.5 621.5 V626.5" stroke="#000" stroke-width="1" fill="none"/>
<text x="201.5" y="605.0" font-size="15.8" font-weight="normal" fill="#000" text-anchor="end" textLength="25.5" lengthAdjust="spacingAndGlyphs" >1.2</text>
<text x="201.5" y="568.0" font-size="15.8" font-weight="normal" fill="#000" text-anchor="end" textLength="25.5" lengthAdjust="spacingAndGlyphs" >1.4</text>
<text x="201.5" y="535.0" font-size="15.8" font-weight="normal" fill="#000" text-anchor="end" textLength="25.5" lengthAdjust="spacingAndGlyphs" >1.6</text>
<text x="201.5" y="506.0" font-size="15.8" font-weight="normal" fill="#000" text-anchor="end" textLength="25.5" lengthAdjust="spacingAndGlyphs" >1.8</text>
<text x="201.5" y="480.0" font-size="15.8" font-weight="normal" fill="#000" text-anchor="end" textLength="25.5" lengthAdjust="spacingAndGlyphs" >2.0</text>
<text x="201.5" y="457.0" font-size="15.8" font-weight="normal" fill="#000" text-anchor="end" textLength="25.5" lengthAdjust="spacingAndGlyphs" >2.2</text>
<text transform="translate(165.5,580) rotate(-90)" font-size="15.8" textLength="96" lengthAdjust="spacingAndGlyphs">e Tperp/Tpar</text>
<text x="260.3" y="653" font-size="15.8" font-weight="normal" fill="#000" text-anchor="end" textLength="43.2" lengthAdjust="spacingAndGlyphs" >00:00</text>
<text x="476.2" y="653" font-size="15.8" font-weight="normal" fill="#000" text-anchor="end" textLength="43.2" lengthAdjust="spacingAndGlyphs" >12:00</text>
<text x="692.3" y="653" font-size="15.8" font-weight="normal" fill="#000" text-anchor="end" textLength="43.2" lengthAdjust="spacingAndGlyphs" >00:00</text>
<text x="260.3" y="673" font-size="15.8" font-weight="normal" fill="#000" text-anchor="end" textLength="43.2" lengthAdjust="spacingAndGlyphs" >4.225</text>
<text x="476.2" y="673" font-size="15.8" font-weight="normal" fill="#000" text-anchor="end" textLength="43.2" lengthAdjust="spacingAndGlyphs" >5.756</text>
<text x="692.3" y="673" font-size="15.8" font-weight="normal" fill="#000" text-anchor="end" textLength="43.2" lengthAdjust="spacingAndGlyphs" >3.179</text>
<text x="260.3" y="693" font-size="15.8" font-weight="normal" fill="#000" text-anchor="end" textLength="59.1" lengthAdjust="spacingAndGlyphs" >-10.580</text>
<text x="476.2" y="693" font-size="15.8" font-weight="normal" fill="#000" text-anchor="end" textLength="49.5" lengthAdjust="spacingAndGlyphs" >-1.544</text>
<text x="692.3" y="693" font-size="15.8" font-weight="normal" fill="#000" text-anchor="end" textLength="59.1" lengthAdjust="spacingAndGlyphs" >-16.190</text>
<text x="260.3" y="713" font-size="15.8" font-weight="normal" fill="#000" text-anchor="end" textLength="43.2" lengthAdjust="spacingAndGlyphs" >2.247</text>
<text x="476.2" y="713" font-size="15.8" font-weight="normal" fill="#000" text-anchor="end" textLength="43.2" lengthAdjust="spacingAndGlyphs" >5.398</text>
<text x="692.3" y="713" font-size="15.8" font-weight="normal" fill="#000" text-anchor="end" textLength="43.2" lengthAdjust="spacingAndGlyphs" >8.125</text>
<text x="260.3" y="733" font-size="15.8" font-weight="normal" fill="#000" text-anchor="end" textLength="43.2" lengthAdjust="spacingAndGlyphs" >4.373</text>
<text x="476.2" y="733" font-size="15.8" font-weight="normal" fill="#000" text-anchor="end" textLength="43.2" lengthAdjust="spacingAndGlyphs" >5.760</text>
<text x="692.3" y="733" font-size="15.8" font-weight="normal" fill="#000" text-anchor="end" textLength="43.2" lengthAdjust="spacingAndGlyphs" >3.447</text>
<text x="174.2" y="673" font-size="15.8" font-weight="normal" fill="#000" text-anchor="end" textLength="10.5" lengthAdjust="spacingAndGlyphs" dx="-6">R</text>
<text x="168.6" y="677.7" font-size="10" font-weight="normal" fill="#000" text-anchor="start" textLength="6" lengthAdjust="spacingAndGlyphs" >E</text>
<text x="174.2" y="693" font-size="15.8" font-weight="normal" fill="#000" text-anchor="end" textLength="36" lengthAdjust="spacingAndGlyphs" >MLat</text>
<text x="174.2" y="713" font-size="15.8" font-weight="normal" fill="#000" text-anchor="end" textLength="30" lengthAdjust="spacingAndGlyphs" >MLT</text>
<text x="174.2" y="733" font-size="15.8" font-weight="normal" fill="#000" text-anchor="end" textLength="8" lengthAdjust="spacingAndGlyphs" >L</text>
<text x="252.1" y="757" font-size="15.8" font-weight="normal" fill="#000" text-anchor="start" textLength="403.5" lengthAdjust="spacingAndGlyphs" >2012-12-01 (336) 23:00 to 2012-12-03 (338) 01:00</text>
<defs><linearGradient id="dlgg" x1="0" y1="0" x2="0" y2="1"><stop offset="0" stop-color="#e8e8e8"/><stop offset="1" stop-color="#d2d2d2"/></linearGradient></defs>
<path d="M346.5 447 L346.5 364 Q346.5 359 351.5 359 L586.5 359 Q591.5 359 591.5 364 L591.5 447 Z" fill="#d8d8d8" stroke="#8a8a8a" stroke-width="1"/>
<path d="M347.5 384 L347.5 364.5 Q347.5 360 352 360 L586 360 Q590.5 360 590.5 364.5 L590.5 384 Z" fill="url(#dlgg)"/>
<path d="M348 365 Q348 360.5 352.5 360.5 L586 360.5" fill="none" stroke="#ffffff" stroke-width="1"/>
<rect x="348" y="383.5" width="241" height="62.5" fill="#eeeeee"/>
<rect x="349" y="384" width="240" height="62" fill="#ffffff"/>
<path d="M359 369.5 L367 369.5 L363 374.5 Z" fill="#9a9a9a"/>
<text x="411" y="377.5" font-size="13" font-weight="bold" fill="#7c7c7c" text-anchor="start" textLength="114.5" lengthAdjust="spacingAndGlyphs" >Progress Monitor</text>
<path d="M569 368.5 L577 376.5 M577 368.5 L569 376.5" stroke="#a0a0a0" stroke-width="2.3"/>
<text x="414.5" y="396.5" font-size="15" font-weight="bold" fill="#2b2333" text-anchor="start" textLength="109" lengthAdjust="spacingAndGlyphs" >running batch</text>
<text x="363" y="409" font-size="9" font-weight="bold" fill="#2b2333" text-anchor="start" textLength="213" lengthAdjust="spacingAndGlyphs" >write /hom...walk3/product_20121218_00.png</text>
<rect x="349.5" y="411.5" width="219" height="19" fill="#eeeeee" stroke="#6a7f98" stroke-width="1"/>
<rect x="350" y="412" width="122" height="18" fill="#a2b6ce"/>
<rect x="569.5" y="411.5" width="19.5" height="19" fill="#d8e4f0" stroke="#8aa0b8" stroke-width="1"/>
<rect x="572" y="414" width="14" height="13.5" rx="2" fill="#d83838" stroke="#a02020" stroke-width="0.8"/>
<path d="M575.5 417.5 L582.5 424 M582.5 417.5 L575.5 424" stroke="#fff" stroke-width="2"/>
<text x="376.5" y="443.5" font-size="13" font-weight="bold" fill="#2b2333" text-anchor="start" textLength="185" lengthAdjust="spacingAndGlyphs" >35/62 (48.7/min, eta 34.5 s)</text>
</svg></body></html>
